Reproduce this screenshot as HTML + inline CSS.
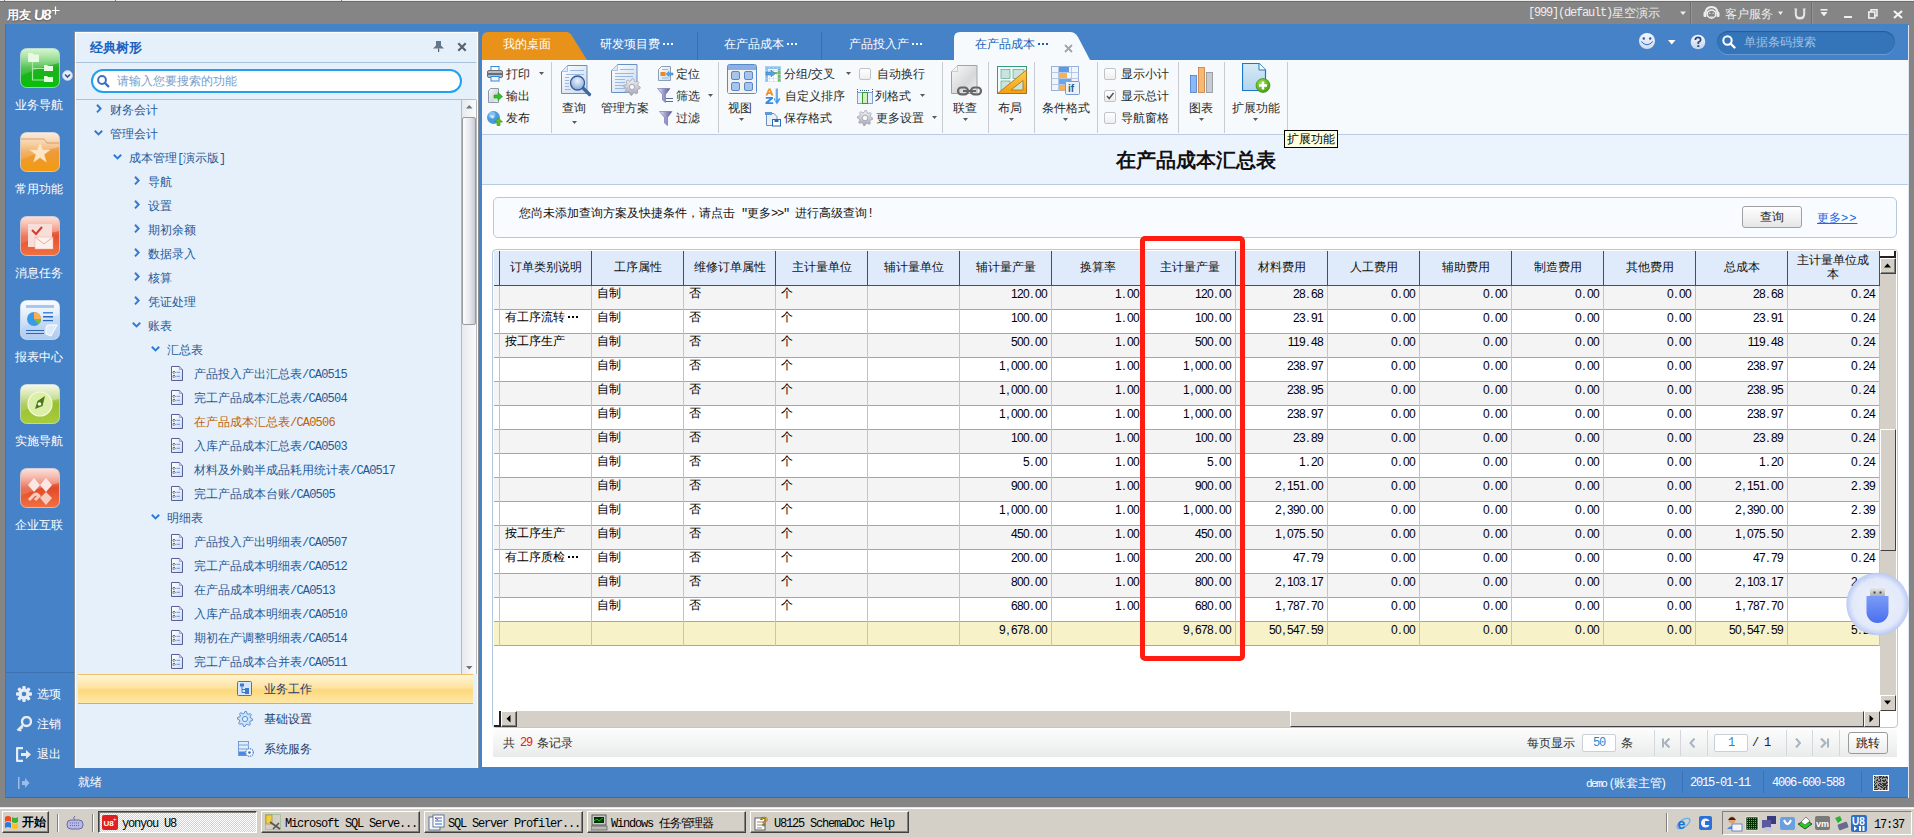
<!DOCTYPE html><html><head><meta charset="utf-8"><style>
*{margin:0;padding:0;box-sizing:border-box}
html,body{width:1914px;height:837px;overflow:hidden;background:#858585;font-family:"Liberation Sans",sans-serif;font-size:12px;color:#000}
.ab{position:absolute}
.t{position:absolute;white-space:nowrap;line-height:14px}
.num{letter-spacing:-0.67px}
.m{font-family:'Liberation Mono',monospace;letter-spacing:-1.2px}
.p{display:inline-block;width:6px;text-align:center;letter-spacing:0}
.ell{display:inline-block;width:13px;height:2px;vertical-align:3px;background-image:linear-gradient(currentColor,currentColor),linear-gradient(currentColor,currentColor),linear-gradient(currentColor,currentColor);background-size:2px 2px;background-position:3px 0,7px 0,11px 0;background-repeat:no-repeat}
</style></head><body>

<div class="ab" style="left:0;top:0;width:1914px;height:1px;background:#ececec"></div>
<div class="ab" style="left:0;top:1px;width:1914px;height:24px;background:#858585;border-top:1px solid #6c6c6c"></div>
<div class="ab" style="left:4px;top:0;width:1px;height:1px;background:#777"></div>
<div class="ab" style="left:115px;top:0;width:1px;height:1px;background:#777"></div>
<div class="ab" style="left:341px;top:0;width:1px;height:1px;background:#777"></div>
<div class="t" style="left:7px;top:8px;color:#fff;font-weight:bold;font-size:12px;text-shadow:0 1px 1px #555">用友</div><div class="t" style="left:34px;top:8px;color:#fff;font-weight:bold;font-size:15px;letter-spacing:-1.5px;transform:skewX(-6deg);text-shadow:0 1px 1px #555">U8</div><svg class="ab" style="left:52px;top:6px" width="8" height="9"><path d="M3.5 0.5 V8.5 M0 4.5 H7.5" stroke="#fff" stroke-width="1.2"/></svg>
<div class="t" style="left:1528px;top:6px;color:#eee;font-family:'Liberation Mono';letter-spacing:-1.2px">[999](default)</div><div class="t" style="left:1612px;top:6px;color:#eee">星空演示</div>
<svg class="ab" style="left:1680px;top:11px" width="7" height="5"><path d="M0 0.5 H6 L3 4 Z" fill="#eee"/></svg>
<div class="ab" style="left:1690px;top:2px;width:2px;height:22px;border-left:1px solid #6e6e6e;border-right:1px solid #959595"></div>
<svg class="ab" style="left:1703px;top:6px" width="17" height="15"><path d="M2.5 8 Q2.5 1 8.5 1 Q14.5 1 14.5 8" stroke="#eee" stroke-width="2" fill="none"/><rect x="0.5" y="6" width="3" height="5" rx="1" fill="#eee"/><rect x="13.5" y="6" width="3" height="5" rx="1" fill="#eee"/><path d="M4.5 6 Q8.5 2 12.5 6 V10 Q8.5 14.5 4.5 10 Z" fill="none" stroke="#eee" stroke-width="1.3"/><path d="M6 7 L7.5 7.5 M9.5 7.5 L11 7 M7 11 H10" stroke="#eee" stroke-width=".9"/></svg>
<div class="t" style="left:1725px;top:7px;color:#eee">客户服务</div>
<svg class="ab" style="left:1778px;top:11px" width="6" height="5"><path d="M0 0.5 H5 L2.5 4 Z" fill="#eee"/></svg>
<svg class="ab" style="left:1793px;top:8px" width="14" height="12"><path d="M1 0.5 H4.5 L3.8 1.5 V6 Q3.8 9 7 9 Q10.2 9 10.2 6 V1.5 L9.5 0.5 H13 L12.2 1.5 V6 Q12.2 11.5 7 11.5 Q1.8 11.5 1.8 6 V1.5 Z" fill="#e6e6e6"/></svg>
<div class="ab" style="left:1811px;top:2px;width:2px;height:22px;border-left:1px solid #6e6e6e;border-right:1px solid #959595"></div>
<svg class="ab" style="left:1820px;top:9px" width="9" height="9"><rect x="0.5" y="0" width="7" height="1.6" fill="#eee"/><path d="M0.5 3 H7.5 L4 7.5 Z" fill="#eee"/></svg>
<div class="ab" style="left:1844px;top:16px;width:8px;height:2px;background:#eee"></div>
<svg class="ab" style="left:1868px;top:9px" width="10" height="10"><rect x="3" y="0.8" width="6" height="6" fill="none" stroke="#eee" stroke-width="1.6"/><rect x="0.8" y="3" width="6" height="6" fill="#858585" stroke="#eee" stroke-width="1.6"/></svg>
<svg class="ab" style="left:1893px;top:10px" width="10" height="9"><path d="M1 1 L9 8 M9 1 L1 8" stroke="#f4f4f4" stroke-width="2.2"/></svg>
<div class="ab" style="left:5px;top:24px;width:1904px;height:774px;background:#4682c8;box-shadow:inset 0 -1px #3c6aa8;border-left:1px solid #6a6e74"></div>
<div class="ab" style="left:1908px;top:25px;width:1px;height:773px;background:#dfe8f3"></div>
<svg class="ab" style="left:20px;top:48px" width="40" height="40"><defs><linearGradient id="g0" x1="0" y1="0" x2="0" y2="1"><stop offset="0" stop-color="#a0e890"/><stop offset=".5" stop-color="#20b020"/><stop offset="1" stop-color="#08c008"/></linearGradient>
<linearGradient id="h0" x1="0" y1="0" x2="0" y2="1"><stop offset="0" stop-color="#fff" stop-opacity=".55"/><stop offset="1" stop-color="#fff" stop-opacity=".1"/></linearGradient></defs>
<rect x="0.5" y="0.5" width="39" height="39" rx="6" fill="url(#g0)" stroke="#fff" stroke-opacity=".5"/>
<path d="M1 7 Q1 1 7 1 H33 Q39 1 39 7 V15 Q20 19 1 28 Z" fill="url(#h0)"/><path d="M8 5 H12.5 L13.5 6.5 H19 V14 H8 Z" fill="#e8fae4"/>
<path d="M12.5 14 V32 H24 M12.5 20.5 H24" stroke="#a8e8a0" stroke-width="1.2" fill="none"/>
<path d="M24 17 H27 L28 18 H33 V23 H24 Z" fill="#e6f9e2"/>
<path d="M24 28 H27 L28 29 H33 V34 H24 Z" fill="#e6f9e2"/></svg>
<div class="t" style="left:15px;top:98px;color:#fff">业务导航</div>
<svg class="ab" style="left:20px;top:132px" width="40" height="40"><defs><linearGradient id="g1" x1="0" y1="0" x2="0" y2="1"><stop offset="0" stop-color="#f6d2b0"/><stop offset=".5" stop-color="#ee9a3a"/><stop offset="1" stop-color="#f29a10"/></linearGradient>
<linearGradient id="h1" x1="0" y1="0" x2="0" y2="1"><stop offset="0" stop-color="#fff" stop-opacity=".55"/><stop offset="1" stop-color="#fff" stop-opacity=".1"/></linearGradient></defs>
<rect x="0.5" y="0.5" width="39" height="39" rx="6" fill="url(#g1)" stroke="#fff" stroke-opacity=".5"/>
<path d="M1 7 Q1 1 7 1 H33 Q39 1 39 7 V15 Q20 19 1 28 Z" fill="url(#h1)"/><path d="M1 7 H24 L27 11 H39" stroke="#c07a40" stroke-opacity=".6" fill="none"/>
<path d="M20 11 L22.6 18 L30 18 L24 22.5 L26.3 30 L20 25.5 L13.7 30 L16 22.5 L10 18 L17.4 18 Z" fill="#fbe6cc" stroke="#f8e0a0" stroke-width=".6"/></svg>
<div class="t" style="left:15px;top:182px;color:#fff">常用功能</div>
<svg class="ab" style="left:20px;top:216px" width="40" height="40"><defs><linearGradient id="g2" x1="0" y1="0" x2="0" y2="1"><stop offset="0" stop-color="#f8b8a8"/><stop offset=".5" stop-color="#e6502e"/><stop offset="1" stop-color="#f27040"/></linearGradient>
<linearGradient id="h2" x1="0" y1="0" x2="0" y2="1"><stop offset="0" stop-color="#fff" stop-opacity=".55"/><stop offset="1" stop-color="#fff" stop-opacity=".1"/></linearGradient></defs>
<rect x="0.5" y="0.5" width="39" height="39" rx="6" fill="url(#g2)" stroke="#fff" stroke-opacity=".5"/>
<path d="M1 7 Q1 1 7 1 H33 Q39 1 39 7 V15 Q20 19 1 28 Z" fill="url(#h2)"/><rect x="8" y="8" width="24" height="23" fill="#f8ded8"/>
<path d="M12 14 L16 18 L22 11" stroke="#d83a2a" stroke-width="2" fill="none"/>
<rect x="15" y="21" width="18" height="12" fill="#fcefec" stroke="#e8b0a0" stroke-width=".5"/>
<path d="M15 21 L24 28 L33 21" stroke="#d8a090" stroke-width=".8" fill="none"/></svg>
<div class="t" style="left:15px;top:266px;color:#fff">消息任务</div>
<svg class="ab" style="left:20px;top:300px" width="40" height="40"><defs><linearGradient id="g3" x1="0" y1="0" x2="0" y2="1"><stop offset="0" stop-color="#f4f8fe"/><stop offset=".5" stop-color="#c8dcf6"/><stop offset="1" stop-color="#b0ccf0"/></linearGradient>
<linearGradient id="h3" x1="0" y1="0" x2="0" y2="1"><stop offset="0" stop-color="#fff" stop-opacity=".55"/><stop offset="1" stop-color="#fff" stop-opacity=".1"/></linearGradient></defs>
<rect x="0.5" y="0.5" width="39" height="39" rx="6" fill="url(#g3)" stroke="#fff" stroke-opacity=".5"/>
<path d="M1 7 Q1 1 7 1 H33 Q39 1 39 7 V15 Q20 19 1 28 Z" fill="url(#h3)"/><rect x="6" y="5" width="28" height="3" fill="#a8c8f4"/>
<circle cx="14" cy="19" r="7" fill="#3a9ae8"/>
<path d="M14 19 V12 A7 7 0 0 1 21 19 Z" fill="#f8b050"/>
<path d="M14 19 H21 A7 7 0 0 1 18.5 24.4 Z" fill="#7cc030"/>
<rect x="23" y="12" width="10" height="1.5" fill="#4a88d0"/><rect x="23" y="16" width="10" height="1.5" fill="#2a68c0"/><rect x="23" y="20" width="10" height="1.2" fill="#2a68c0"/>
<rect x="6" y="30" width="18" height="1" fill="#2a68c0"/><rect x="6" y="33" width="18" height="1" fill="#2a68c0"/>
<path d="M26 34 V28 Q26 25 29 25 H37 L31 36 Z" fill="#dfeaf8" stroke="#fff"/></svg>
<div class="t" style="left:15px;top:350px;color:#fff">报表中心</div>
<svg class="ab" style="left:20px;top:384px" width="40" height="40"><defs><linearGradient id="g4" x1="0" y1="0" x2="0" y2="1"><stop offset="0" stop-color="#e2f0c8"/><stop offset=".5" stop-color="#98c030"/><stop offset="1" stop-color="#a8cc3c"/></linearGradient>
<linearGradient id="h4" x1="0" y1="0" x2="0" y2="1"><stop offset="0" stop-color="#fff" stop-opacity=".55"/><stop offset="1" stop-color="#fff" stop-opacity=".1"/></linearGradient></defs>
<rect x="0.5" y="0.5" width="39" height="39" rx="6" fill="url(#g4)" stroke="#fff" stroke-opacity=".5"/>
<path d="M1 7 Q1 1 7 1 H33 Q39 1 39 7 V15 Q20 19 1 28 Z" fill="url(#h4)"/><circle cx="20" cy="20" r="12" fill="#dcefa8" stroke="#f4fadc" stroke-width="1.2"/>
<path d="M25 12 L22.5 22 L15 25 L17.5 17 Z" fill="#4a7a10"/>
<circle cx="19.5" cy="20" r="1.8" fill="#fff"/></svg>
<div class="t" style="left:15px;top:434px;color:#fff">实施导航</div>
<svg class="ab" style="left:20px;top:468px" width="40" height="40"><defs><linearGradient id="g5" x1="0" y1="0" x2="0" y2="1"><stop offset="0" stop-color="#f8b8a8"/><stop offset=".5" stop-color="#e24a2a"/><stop offset="1" stop-color="#f27040"/></linearGradient>
<linearGradient id="h5" x1="0" y1="0" x2="0" y2="1"><stop offset="0" stop-color="#fff" stop-opacity=".55"/><stop offset="1" stop-color="#fff" stop-opacity=".1"/></linearGradient></defs>
<rect x="0.5" y="0.5" width="39" height="39" rx="6" fill="url(#g5)" stroke="#fff" stroke-opacity=".5"/>
<path d="M1 7 Q1 1 7 1 H33 Q39 1 39 7 V15 Q20 19 1 28 Z" fill="url(#h5)"/><path d="M14 10 L20 17 L14 24 L8 17 Z" fill="#fbe8e4"/>
<path d="M26 10 L32 17 L26 24 L20 17 Z" fill="#fbe8e4"/>
<path d="M26 24 L32 30 L26 37 L20 30 Z" fill="#f6ccc0"/>
<path d="M9 32 L14 27 Q17 25 19 28 L15 32" stroke="#f6ccc0" stroke-width="3" fill="none"/></svg>
<div class="t" style="left:15px;top:518px;color:#fff">企业互联</div>
<svg class="ab" style="left:62px;top:70px" width="11" height="11"><circle cx="5.5" cy="5.5" r="5" fill="#e8eef8" stroke="#b8c8e0" stroke-width=".8"/><path d="M3 4.5 L5.5 7 L8 4.5" stroke="#2a5aa0" stroke-width="1.6" fill="none"/></svg>
<div class="ab" style="left:6px;top:672px;width:69px;height:1px;background:#3c70b0"></div>
<svg class="ab" style="left:16px;top:686px" width="16" height="16"><g fill="#e6ecf4"><circle cx="8" cy="8" r="5.5"/><rect x="6.3" y="0" width="3.4" height="16" rx="1" transform="rotate(0 8 8)"/><rect x="6.3" y="0" width="3.4" height="16" rx="1" transform="rotate(45 8 8)"/><rect x="6.3" y="0" width="3.4" height="16" rx="1" transform="rotate(90 8 8)"/><rect x="6.3" y="0" width="3.4" height="16" rx="1" transform="rotate(135 8 8)"/></g><circle cx="8" cy="8" r="2.3" fill="#4682c8"/></svg>
<svg class="ab" style="left:16px;top:716px" width="16" height="16"><circle cx="10.5" cy="5.5" r="4.5" fill="none" stroke="#e6ecf4" stroke-width="2.4"/><path d="M7.5 8.5 L1.5 14.5 M3 13 L5 15 M5 11 L6.5 12.5" stroke="#e6ecf4" stroke-width="2.4"/></svg>
<svg class="ab" style="left:16px;top:747px" width="16" height="15"><path d="M7 1 H2 Q1 1 1 2 V13 Q1 14 2 14 H7" stroke="#e6ecf4" stroke-width="2.4" fill="none"/><path d="M5 6 H10 V3 L15 7.5 L10 12 V9 H5 Z" fill="#e6ecf4"/></svg>
<div class="t" style="left:37px;top:687px;color:#fff">选项</div>
<div class="t" style="left:37px;top:717px;color:#fff">注销</div>
<div class="t" style="left:37px;top:747px;color:#fff">退出</div>
<svg class="ab" style="left:18px;top:776px" width="12" height="14"><rect x="0" y="1" width="1.5" height="12" fill="#9dbde6"/><path d="M4 5 H7 V2 L11.5 7 L7 12 V9 H4 Z" fill="#9dbde6"/></svg>
<div class="ab" style="left:74px;top:31px;width:405px;height:737px;background:#8a8f96"></div>
<div class="ab" style="left:75px;top:32px;width:403px;height:736px;background:#e6f0fa;border:1px solid #fff;border-right:1px solid #fff;border-bottom:0"></div>
<div class="t" style="left:90px;top:41px;color:#1a62c0;font-weight:bold;font-size:13px">经典树形</div>
<svg class="ab" style="left:432px;top:40px" width="13" height="13"><path d="M4 1 H9 V5.5 L12 8.5 H1 L4 5.5 Z" fill="#66768a"/><rect x="6" y="8.5" width="1.2" height="3.5" fill="#55606e"/></svg>
<svg class="ab" style="left:457px;top:42px" width="10" height="10"><path d="M1.3 1.3 L8.7 8.7 M8.7 1.3 L1.3 8.7" stroke="#566474" stroke-width="2.2"/></svg>
<div class="ab" style="left:76px;top:62px;width:400px;height:1px;background:#a9c2dc"></div>
<div class="ab" style="left:91px;top:69px;width:371px;height:24px;border:2px solid #22a0f0;border-radius:12px;background:#fff"></div>
<svg class="ab" style="left:97px;top:75px" width="13" height="13"><circle cx="5" cy="5" r="3.9" fill="none" stroke="#3a72c0" stroke-width="2"/><path d="M8 8 L11.3 11.3" stroke="#3a72c0" stroke-width="2.4" stroke-linecap="round"/></svg>
<div class="t" style="left:117px;top:74px;color:#7b9dca">请输入您要搜索的功能</div>
<div class="ab" style="left:76px;top:99px;width:400px;height:1px;background:#a9c2dc"></div>
<svg width="0" height="0" style="position:absolute"><defs><linearGradient id="fgr" x1="0" y1="0" x2="1" y2="1"><stop offset="0" stop-color="#fff"/><stop offset="1" stop-color="#c8dcf4"/></linearGradient></defs></svg>
<svg class="ab" style="left:96px;top:104px" width="6" height="10"><path d="M1 0.8 L4.6 4.6 L1 8.4" stroke="#2f7ad8" stroke-width="2" fill="none"/></svg>
<div class="t" style="left:110px;top:103px;color:#1f5a9a">财务会计</div>
<svg class="ab" style="left:94px;top:130px" width="10" height="6"><path d="M0.8 0.8 L4.5 4.4 L8.2 0.8" stroke="#2f7ad8" stroke-width="2" fill="none"/></svg>
<div class="t" style="left:110px;top:127px;color:#1f5a9a">管理会计</div>
<svg class="ab" style="left:113px;top:154px" width="10" height="6"><path d="M0.8 0.8 L4.5 4.4 L8.2 0.8" stroke="#2f7ad8" stroke-width="2" fill="none"/></svg>
<div class="t" style="left:129px;top:151px;color:#1f5a9a">成本管理<span class=m>[</span>演示版<span class=m>]</span></div>
<svg class="ab" style="left:134px;top:176px" width="6" height="10"><path d="M1 0.8 L4.6 4.6 L1 8.4" stroke="#2f7ad8" stroke-width="2" fill="none"/></svg>
<div class="t" style="left:148px;top:175px;color:#1f5a9a">导航</div>
<svg class="ab" style="left:134px;top:200px" width="6" height="10"><path d="M1 0.8 L4.6 4.6 L1 8.4" stroke="#2f7ad8" stroke-width="2" fill="none"/></svg>
<div class="t" style="left:148px;top:199px;color:#1f5a9a">设置</div>
<svg class="ab" style="left:134px;top:224px" width="6" height="10"><path d="M1 0.8 L4.6 4.6 L1 8.4" stroke="#2f7ad8" stroke-width="2" fill="none"/></svg>
<div class="t" style="left:148px;top:223px;color:#1f5a9a">期初余额</div>
<svg class="ab" style="left:134px;top:248px" width="6" height="10"><path d="M1 0.8 L4.6 4.6 L1 8.4" stroke="#2f7ad8" stroke-width="2" fill="none"/></svg>
<div class="t" style="left:148px;top:247px;color:#1f5a9a">数据录入</div>
<svg class="ab" style="left:134px;top:272px" width="6" height="10"><path d="M1 0.8 L4.6 4.6 L1 8.4" stroke="#2f7ad8" stroke-width="2" fill="none"/></svg>
<div class="t" style="left:148px;top:271px;color:#1f5a9a">核算</div>
<svg class="ab" style="left:134px;top:296px" width="6" height="10"><path d="M1 0.8 L4.6 4.6 L1 8.4" stroke="#2f7ad8" stroke-width="2" fill="none"/></svg>
<div class="t" style="left:148px;top:295px;color:#1f5a9a">凭证处理</div>
<svg class="ab" style="left:132px;top:322px" width="10" height="6"><path d="M0.8 0.8 L4.5 4.4 L8.2 0.8" stroke="#2f7ad8" stroke-width="2" fill="none"/></svg>
<div class="t" style="left:148px;top:319px;color:#1f5a9a">账表</div>
<svg class="ab" style="left:151px;top:346px" width="10" height="6"><path d="M0.8 0.8 L4.5 4.4 L8.2 0.8" stroke="#2f7ad8" stroke-width="2" fill="none"/></svg>
<div class="t" style="left:167px;top:343px;color:#1f5a9a">汇总表</div>
<svg class="ab" style="left:171px;top:366px" width="12" height="15"><path d="M0.5 0.5 H8.5 L11.5 3.5 V14.5 H0.5 Z" fill="url(#fgr)" stroke="#5c5c98"/><path d="M8.5 0.5 V3.5 H11.5" fill="#c8cce8" stroke="#8a8ab8" stroke-width=".6"/><path d="M3 5 L4.3 6.3 L3 7.6 L1.7 6.3 Z M3 9 L4.3 10.3 L3 11.6 L1.7 10.3 Z" fill="none" stroke="#333" stroke-width=".7"/><path d="M5.5 6.3 H9 M5.5 10.3 H9" stroke="#6a8ac8" stroke-width=".9"/></svg>
<div class="t" style="left:194px;top:367px;color:#1f5a9a">产品投入产出汇总表<span class=m style="letter-spacing:-0.8px">/CA0515</span></div>
<svg class="ab" style="left:171px;top:390px" width="12" height="15"><path d="M0.5 0.5 H8.5 L11.5 3.5 V14.5 H0.5 Z" fill="url(#fgr)" stroke="#5c5c98"/><path d="M8.5 0.5 V3.5 H11.5" fill="#c8cce8" stroke="#8a8ab8" stroke-width=".6"/><path d="M3 5 L4.3 6.3 L3 7.6 L1.7 6.3 Z M3 9 L4.3 10.3 L3 11.6 L1.7 10.3 Z" fill="none" stroke="#333" stroke-width=".7"/><path d="M5.5 6.3 H9 M5.5 10.3 H9" stroke="#6a8ac8" stroke-width=".9"/></svg>
<div class="t" style="left:194px;top:391px;color:#1f5a9a">完工产品成本汇总表<span class=m style="letter-spacing:-0.8px">/CA0504</span></div>
<svg class="ab" style="left:171px;top:414px" width="12" height="15"><path d="M0.5 0.5 H8.5 L11.5 3.5 V14.5 H0.5 Z" fill="url(#fgr)" stroke="#5c5c98"/><path d="M8.5 0.5 V3.5 H11.5" fill="#c8cce8" stroke="#8a8ab8" stroke-width=".6"/><path d="M3 5 L4.3 6.3 L3 7.6 L1.7 6.3 Z M3 9 L4.3 10.3 L3 11.6 L1.7 10.3 Z" fill="none" stroke="#333" stroke-width=".7"/><path d="M5.5 6.3 H9 M5.5 10.3 H9" stroke="#6a8ac8" stroke-width=".9"/></svg>
<div class="t" style="left:194px;top:415px;color:#c0600a">在产品成本汇总表<span class=m style="letter-spacing:-0.8px">/CA0506</span></div>
<svg class="ab" style="left:171px;top:438px" width="12" height="15"><path d="M0.5 0.5 H8.5 L11.5 3.5 V14.5 H0.5 Z" fill="url(#fgr)" stroke="#5c5c98"/><path d="M8.5 0.5 V3.5 H11.5" fill="#c8cce8" stroke="#8a8ab8" stroke-width=".6"/><path d="M3 5 L4.3 6.3 L3 7.6 L1.7 6.3 Z M3 9 L4.3 10.3 L3 11.6 L1.7 10.3 Z" fill="none" stroke="#333" stroke-width=".7"/><path d="M5.5 6.3 H9 M5.5 10.3 H9" stroke="#6a8ac8" stroke-width=".9"/></svg>
<div class="t" style="left:194px;top:439px;color:#1f5a9a">入库产品成本汇总表<span class=m style="letter-spacing:-0.8px">/CA0503</span></div>
<svg class="ab" style="left:171px;top:462px" width="12" height="15"><path d="M0.5 0.5 H8.5 L11.5 3.5 V14.5 H0.5 Z" fill="url(#fgr)" stroke="#5c5c98"/><path d="M8.5 0.5 V3.5 H11.5" fill="#c8cce8" stroke="#8a8ab8" stroke-width=".6"/><path d="M3 5 L4.3 6.3 L3 7.6 L1.7 6.3 Z M3 9 L4.3 10.3 L3 11.6 L1.7 10.3 Z" fill="none" stroke="#333" stroke-width=".7"/><path d="M5.5 6.3 H9 M5.5 10.3 H9" stroke="#6a8ac8" stroke-width=".9"/></svg>
<div class="t" style="left:194px;top:463px;color:#1f5a9a">材料及外购半成品耗用统计表<span class=m style="letter-spacing:-0.8px">/CA0517</span></div>
<svg class="ab" style="left:171px;top:486px" width="12" height="15"><path d="M0.5 0.5 H8.5 L11.5 3.5 V14.5 H0.5 Z" fill="url(#fgr)" stroke="#5c5c98"/><path d="M8.5 0.5 V3.5 H11.5" fill="#c8cce8" stroke="#8a8ab8" stroke-width=".6"/><path d="M3 5 L4.3 6.3 L3 7.6 L1.7 6.3 Z M3 9 L4.3 10.3 L3 11.6 L1.7 10.3 Z" fill="none" stroke="#333" stroke-width=".7"/><path d="M5.5 6.3 H9 M5.5 10.3 H9" stroke="#6a8ac8" stroke-width=".9"/></svg>
<div class="t" style="left:194px;top:487px;color:#1f5a9a">完工产品成本台账<span class=m style="letter-spacing:-0.8px">/CA0505</span></div>
<svg class="ab" style="left:151px;top:514px" width="10" height="6"><path d="M0.8 0.8 L4.5 4.4 L8.2 0.8" stroke="#2f7ad8" stroke-width="2" fill="none"/></svg>
<div class="t" style="left:167px;top:511px;color:#1f5a9a">明细表</div>
<svg class="ab" style="left:171px;top:534px" width="12" height="15"><path d="M0.5 0.5 H8.5 L11.5 3.5 V14.5 H0.5 Z" fill="url(#fgr)" stroke="#5c5c98"/><path d="M8.5 0.5 V3.5 H11.5" fill="#c8cce8" stroke="#8a8ab8" stroke-width=".6"/><path d="M3 5 L4.3 6.3 L3 7.6 L1.7 6.3 Z M3 9 L4.3 10.3 L3 11.6 L1.7 10.3 Z" fill="none" stroke="#333" stroke-width=".7"/><path d="M5.5 6.3 H9 M5.5 10.3 H9" stroke="#6a8ac8" stroke-width=".9"/></svg>
<div class="t" style="left:194px;top:535px;color:#1f5a9a">产品投入产出明细表<span class=m style="letter-spacing:-0.8px">/CA0507</span></div>
<svg class="ab" style="left:171px;top:558px" width="12" height="15"><path d="M0.5 0.5 H8.5 L11.5 3.5 V14.5 H0.5 Z" fill="url(#fgr)" stroke="#5c5c98"/><path d="M8.5 0.5 V3.5 H11.5" fill="#c8cce8" stroke="#8a8ab8" stroke-width=".6"/><path d="M3 5 L4.3 6.3 L3 7.6 L1.7 6.3 Z M3 9 L4.3 10.3 L3 11.6 L1.7 10.3 Z" fill="none" stroke="#333" stroke-width=".7"/><path d="M5.5 6.3 H9 M5.5 10.3 H9" stroke="#6a8ac8" stroke-width=".9"/></svg>
<div class="t" style="left:194px;top:559px;color:#1f5a9a">完工产品成本明细表<span class=m style="letter-spacing:-0.8px">/CA0512</span></div>
<svg class="ab" style="left:171px;top:582px" width="12" height="15"><path d="M0.5 0.5 H8.5 L11.5 3.5 V14.5 H0.5 Z" fill="url(#fgr)" stroke="#5c5c98"/><path d="M8.5 0.5 V3.5 H11.5" fill="#c8cce8" stroke="#8a8ab8" stroke-width=".6"/><path d="M3 5 L4.3 6.3 L3 7.6 L1.7 6.3 Z M3 9 L4.3 10.3 L3 11.6 L1.7 10.3 Z" fill="none" stroke="#333" stroke-width=".7"/><path d="M5.5 6.3 H9 M5.5 10.3 H9" stroke="#6a8ac8" stroke-width=".9"/></svg>
<div class="t" style="left:194px;top:583px;color:#1f5a9a">在产品成本明细表<span class=m style="letter-spacing:-0.8px">/CA0513</span></div>
<svg class="ab" style="left:171px;top:606px" width="12" height="15"><path d="M0.5 0.5 H8.5 L11.5 3.5 V14.5 H0.5 Z" fill="url(#fgr)" stroke="#5c5c98"/><path d="M8.5 0.5 V3.5 H11.5" fill="#c8cce8" stroke="#8a8ab8" stroke-width=".6"/><path d="M3 5 L4.3 6.3 L3 7.6 L1.7 6.3 Z M3 9 L4.3 10.3 L3 11.6 L1.7 10.3 Z" fill="none" stroke="#333" stroke-width=".7"/><path d="M5.5 6.3 H9 M5.5 10.3 H9" stroke="#6a8ac8" stroke-width=".9"/></svg>
<div class="t" style="left:194px;top:607px;color:#1f5a9a">入库产品成本明细表<span class=m style="letter-spacing:-0.8px">/CA0510</span></div>
<svg class="ab" style="left:171px;top:630px" width="12" height="15"><path d="M0.5 0.5 H8.5 L11.5 3.5 V14.5 H0.5 Z" fill="url(#fgr)" stroke="#5c5c98"/><path d="M8.5 0.5 V3.5 H11.5" fill="#c8cce8" stroke="#8a8ab8" stroke-width=".6"/><path d="M3 5 L4.3 6.3 L3 7.6 L1.7 6.3 Z M3 9 L4.3 10.3 L3 11.6 L1.7 10.3 Z" fill="none" stroke="#333" stroke-width=".7"/><path d="M5.5 6.3 H9 M5.5 10.3 H9" stroke="#6a8ac8" stroke-width=".9"/></svg>
<div class="t" style="left:194px;top:631px;color:#1f5a9a">期初在产调整明细表<span class=m style="letter-spacing:-0.8px">/CA0514</span></div>
<svg class="ab" style="left:171px;top:654px" width="12" height="15"><path d="M0.5 0.5 H8.5 L11.5 3.5 V14.5 H0.5 Z" fill="url(#fgr)" stroke="#5c5c98"/><path d="M8.5 0.5 V3.5 H11.5" fill="#c8cce8" stroke="#8a8ab8" stroke-width=".6"/><path d="M3 5 L4.3 6.3 L3 7.6 L1.7 6.3 Z M3 9 L4.3 10.3 L3 11.6 L1.7 10.3 Z" fill="none" stroke="#333" stroke-width=".7"/><path d="M5.5 6.3 H9 M5.5 10.3 H9" stroke="#6a8ac8" stroke-width=".9"/></svg>
<div class="t" style="left:194px;top:655px;color:#1f5a9a">完工产品成本合并表<span class=m style="letter-spacing:-0.8px">/CA0511</span></div>
<div class="ab" style="left:461px;top:100px;width:16px;height:574px;background:linear-gradient(90deg,#e6eaee,#fafbfc);border-left:1px solid #b8b8b8;border-right:1px solid #b8b8b8"></div>
<div class="ab" style="left:462px;top:117px;width:14px;height:208px;background:linear-gradient(90deg,#fdfdfe,#e4e6ec 60%,#c6cad6);border:1px solid #9a9a9a;border-radius:2px"></div>
<svg class="ab" style="left:466px;top:105px" width="7" height="4"><path d="M0 3.5 H6.5 L3.25 0 Z" fill="#6a7480"/></svg>
<svg class="ab" style="left:466px;top:666px" width="7" height="4"><path d="M0 0 H6.5 L3.25 3.5 Z" fill="#6a7480"/></svg>
<div class="ab" style="left:78px;top:674px;width:395px;height:30px;background:linear-gradient(180deg,#fff6d2,#fde3a0 45%,#fdd97e 55%,#fee7a8);border-top:1px solid #f0c070;border-bottom:1px solid #e8a850"></div>
<svg class="ab" style="left:237px;top:681px" width="15" height="15"><rect x="0.5" y="0.5" width="14" height="14" rx="1" fill="#d8e8fa" stroke="#3a78c8"/><rect x="3" y="2.5" width="4" height="3" fill="#3a7ad0"/><path d="M5 5.5 V11.5 H8 M5 8.5 H8" stroke="#3a7ad0" fill="none"/><rect x="8" y="7" width="4" height="3" fill="#3a7ad0"/><rect x="8" y="10" width="4" height="3" fill="#3a7ad0"/></svg>
<div class="t" style="left:264px;top:682px;color:#1a3a6a">业务工作</div>
<svg class="ab" style="left:237px;top:711px" width="16" height="16"><polygon points="8.00,0.40 9.48,0.55 10.14,2.83 11.11,3.34 13.37,2.63 14.32,3.78 13.17,5.86 13.49,6.91 15.60,8.00 15.45,9.48 13.17,10.14 12.66,11.11 13.37,13.37 12.22,14.32 10.14,13.17 9.09,13.49 8.00,15.60 6.52,15.45 5.86,13.17 4.89,12.66 2.63,13.37 1.68,12.22 2.83,10.14 2.51,9.09 0.40,8.00 0.55,6.52 2.83,5.86 3.34,4.89 2.63,2.63 3.78,1.68 5.86,2.83 6.91,2.51" fill="#cfe2f8" stroke="#4a88d0" stroke-width=".9"/><circle cx="8" cy="8" r="2.6" fill="#e6f0fa" stroke="#4a88d0" stroke-width=".9"/></svg>
<div class="t" style="left:264px;top:712px;color:#1a3a6a">基础设置</div>
<svg class="ab" style="left:238px;top:741px" width="16" height="16"><rect x="0.5" y="0.5" width="10" height="14" fill="#e0ecf8" stroke="#5a8ad0" stroke-width=".8"/><rect x="1" y="3" width="9.5" height="2" fill="#a8c8ec"/><rect x="1" y="7" width="9.5" height="2" fill="#a8c8ec"/><rect x="1" y="10.5" width="9.5" height="4" fill="#4a8ae0"/><circle cx="11.5" cy="11.5" r="3.8" fill="#fff" stroke="#5a8ad0" stroke-width="1.4" stroke-dasharray="1.2 .8"/><circle cx="11.5" cy="11.5" r="1.3" fill="#3a6ab0"/></svg>
<div class="t" style="left:264px;top:742px;color:#1a3a6a">系统服务</div>
<div class="ab" style="left:482px;top:60px;width:1426px;height:707px;background:#fff"></div>
<svg class="ab" style="left:482px;top:32px" width="110" height="28"><path d="M0 28 V6 Q0 0 6 0 H84 Q88 0 90 4 L105 28 Z" fill="#e8921a"/></svg>
<div class="t" style="left:503px;top:37px;color:#fff">我的桌面</div>
<div class="t" style="left:600px;top:37px;color:#fff">研发项目费<span class=ell></span></div>
<div class="ab" style="left:697px;top:32px;width:1px;height:28px;background:#3a6eb0"></div>
<div class="t" style="left:724px;top:37px;color:#fff">在产品成本<span class=ell></span></div>
<div class="ab" style="left:821px;top:32px;width:1px;height:28px;background:#3a6eb0"></div>
<div class="t" style="left:849px;top:37px;color:#fff">产品投入产<span class=ell></span></div>
<svg class="ab" style="left:954px;top:32px" width="140" height="28"><path d="M0 28 V6 Q0 0 6 0 H116 Q121 0 124 5 L136 28 Z" fill="#f6fafd"/></svg>
<div class="t" style="left:975px;top:37px;color:#1a5eb8">在产品成本<span class=ell></span></div>
<svg class="ab" style="left:1064px;top:44px" width="9" height="9"><path d="M1 1 L8 8 M8 1 L1 8" stroke="#a0a4a8" stroke-width="1.8"/></svg>
<svg class="ab" style="left:1638px;top:32px" width="18" height="18"><defs><linearGradient id="smg" x1="0" y1="0" x2="0" y2="1"><stop offset="0" stop-color="#f4f6fa"/><stop offset="1" stop-color="#cfdcee"/></linearGradient></defs><circle cx="9" cy="9" r="8" fill="url(#smg)"/><circle cx="5.8" cy="6.5" r="1.2" fill="#2a5aa0"/><circle cx="12.2" cy="6.5" r="1.2" fill="#2a5aa0"/><path d="M3.2 9.5 Q9 16 14.8 9.5" stroke="#3a6ab0" stroke-width="1" fill="none"/></svg>
<svg class="ab" style="left:1668px;top:40px" width="8" height="5"><path d="M0 0 H7.5 L3.75 4.5 Z" fill="#fff"/></svg>
<svg class="ab" style="left:1690px;top:34px" width="16" height="16"><defs><linearGradient id="hpg" x1="0" y1="0" x2="0" y2="1"><stop offset="0" stop-color="#f8f8fc"/><stop offset="1" stop-color="#c4d4ec"/></linearGradient></defs><circle cx="8" cy="8" r="7.3" fill="url(#hpg)"/><path d="M5.3 6 Q5.3 3.3 8 3.3 Q10.7 3.3 10.7 5.8 Q10.7 7.4 8.3 8.3 V10" stroke="#2a4a80" stroke-width="1.7" fill="none"/><rect x="7.3" y="11.2" width="2" height="1.8" fill="#2a4a80"/></svg>
<div class="ab" style="left:1717px;top:31px;width:178px;height:23px;border-radius:12px;background:#3474b8;box-shadow:inset 0 1px 1px #2a5a90, 0 1px 0 #6a9ad4"></div>
<svg class="ab" style="left:1722px;top:35px" width="14" height="14"><circle cx="5.5" cy="5.5" r="4.2" fill="none" stroke="#fff" stroke-width="2"/><path d="M8.5 8.5 L12.5 12.5" stroke="#fff" stroke-width="2.4" stroke-linecap="round"/></svg>
<div class="t" style="left:1744px;top:35px;color:#9cc0e6">单据条码搜索</div>
<div class="ab" style="left:482px;top:60px;width:1426px;height:75px;background:#f6fafd;border-bottom:1px solid #b8cce4"></div>
<div class="ab" style="left:551px;top:62px;width:1px;height:71px;background:#c8ccd2"></div>
<div class="ab" style="left:718px;top:62px;width:1px;height:71px;background:#c8ccd2"></div>
<div class="ab" style="left:942px;top:62px;width:1px;height:71px;background:#c8ccd2"></div>
<div class="ab" style="left:988px;top:62px;width:1px;height:71px;background:#c8ccd2"></div>
<div class="ab" style="left:1034px;top:62px;width:1px;height:71px;background:#c8ccd2"></div>
<div class="ab" style="left:1097px;top:62px;width:1px;height:71px;background:#c8ccd2"></div>
<div class="ab" style="left:1178px;top:62px;width:1px;height:71px;background:#c8ccd2"></div>
<div class="ab" style="left:1224px;top:62px;width:1px;height:71px;background:#c8ccd2"></div>
<div class="ab" style="left:1287px;top:62px;width:1px;height:71px;background:#c8ccd2"></div>
<svg width="0" height="0" style="position:absolute"><defs>
<linearGradient id="docg" x1="0" y1="0" x2="1" y2="1"><stop offset="0" stop-color="#ffffff"/><stop offset="1" stop-color="#c6d8ee"/></linearGradient>
<linearGradient id="grayd" x1="0" y1="0" x2="1" y2="1"><stop offset="0" stop-color="#fafafa"/><stop offset=".6" stop-color="#d6d8da"/><stop offset="1" stop-color="#f0f0f0"/></linearGradient>
<radialGradient id="lens" cx=".5" cy=".35" r=".6"><stop offset="0" stop-color="#eef4fc"/><stop offset="1" stop-color="#8eb0e0"/></radialGradient>
<linearGradient id="gearg" x1="0" y1="0" x2="0" y2="1"><stop offset="0" stop-color="#f2f2f6"/><stop offset="1" stop-color="#a8a8b4"/></linearGradient>
<linearGradient id="funl" x1="0" y1="0" x2="1" y2="0"><stop offset="0" stop-color="#e8e8f4"/><stop offset=".5" stop-color="#9a9ac8"/><stop offset="1" stop-color="#5a5a98"/></linearGradient>
<linearGradient id="ext" x1="0" y1="0" x2="0" y2="1"><stop offset="0" stop-color="#d6eaf6"/><stop offset="1" stop-color="#b4d4ec"/></linearGradient>
<radialGradient id="plus" cx=".4" cy=".35" r=".7"><stop offset="0" stop-color="#a8e050"/><stop offset="1" stop-color="#3a9a10"/></radialGradient>
<linearGradient id="ruler" x1="0" y1="0" x2="0" y2="1"><stop offset="0" stop-color="#ffd050"/><stop offset="1" stop-color="#f0a010"/></linearGradient>
</defs></svg>
<svg class="ab" style="left:487px;top:66px" width="17" height="16"><rect x="4" y="0.5" width="8" height="5" fill="#fff" stroke="#3a88d8"/>
<rect x="0.5" y="4.5" width="15" height="7" rx="1.5" fill="#b8bcc0" stroke="#6a6e72"/>
<rect x="1" y="7" width="14" height="2" fill="#6a6e72"/>
<rect x="4" y="10.5" width="8" height="4.5" fill="#e8f4ff" stroke="#3a88d8"/></svg>
<svg class="ab" style="left:487px;top:88px" width="17" height="16"><path d="M3.5 0.5 H11.5 V14.5 H1.5 V3 Z" fill="url(#grayd)" stroke="#8a9aaa"/>
<path d="M7 7 H11 V4.5 L15.5 8.5 L11 12.5 V10 H7 Z" fill="#30c030" stroke="#1a9a1a" stroke-width=".6"/></svg>
<svg class="ab" style="left:487px;top:110px" width="17" height="16"><circle cx="6.5" cy="7.5" r="6.5" fill="#4a9ae0"/><circle cx="5" cy="5" r="3.5" fill="#9ad0f8" opacity=".7"/>
<path d="M3 6 Q5 4 7 6 L6 9 Z" fill="#e8f0f0" opacity=".8"/>
<path d="M11.5 8 L15.5 12 H13 V15.5 H10 V12 H7.5 Z" fill="#60c020" stroke="#3a8a10" stroke-width=".6"/></svg>
<svg class="ab" style="left:561px;top:65px" width="31" height="32"><path d="M6.5 0.5 H26 V28.5 H0.5 V6.5 Z" fill="url(#docg)" stroke="#6a90c0"/>
<path d="M0.5 6.5 H6.5 V0.5" fill="#dfe8f4" stroke="#8aa8d0" stroke-width=".6"/>
<path d="M9 5.5 H23 M5 9.5 H23 M4 12.5 H8 M4 15.5 H8 M4 18.5 H8 M4 21.5 H8 M4 24.5 H10" stroke="#9ab8e0" stroke-width="1.2"/>
<path d="M21 22 L28.5 29.5" stroke="#3a6aa0" stroke-width="3.2" stroke-linecap="round"/>
<circle cx="16.5" cy="18" r="7" fill="url(#lens)" stroke="#3a5a90" stroke-width="1.3"/></svg>
<svg class="ab" style="left:611px;top:64px" width="32" height="32"><path d="M6.5 0.5 H26 V28.5 H0.5 V6.5 Z" fill="url(#docg)" stroke="#6a90c0"/>
<path d="M0.5 6.5 H6.5 V0.5" fill="#dfe8f4" stroke="#8aa8d0" stroke-width=".6"/>
<path d="M9 5.5 H23 M4 9.5 H23 M4 12.5 H22 M4 15.5 H14 M4 18.5 H14 M4 21.5 H14 M4 24.5 H14" stroke="#9ab8e0" stroke-width="1.2"/><polygon points="21.00,14.80 22.60,14.96 23.37,17.27 24.44,17.84 26.80,17.20 27.82,18.44 26.73,20.63 27.08,21.79 29.20,23.00 29.04,24.60 26.73,25.37 26.16,26.44 26.80,28.80 25.56,29.82 23.37,28.73 22.21,29.08 21.00,31.20 19.40,31.04 18.63,28.73 17.56,28.16 15.20,28.80 14.18,27.56 15.27,25.37 14.92,24.21 12.80,23.00 12.96,21.40 15.27,20.63 15.84,19.56 15.20,17.20 16.44,16.18 18.63,17.27 19.79,16.92" fill="url(#gearg)" stroke="#9a9aa8" stroke-width=".7"/><circle cx="21" cy="23" r="2.6" fill="#f6fafd" stroke="#9a9aa8" stroke-width=".8"/></svg>
<svg class="ab" style="left:658px;top:66px" width="16" height="16"><path d="M3.5 0.5 H12.5 V14.5 H0.5 V3.5 Z" fill="url(#docg)" stroke="#8aa0b8"/>
<path d="M4 3.5 H10 M4 12 H10" stroke="#9ab8e0"/>
<rect x="2.5" y="6" width="5" height="4" fill="#e88a20"/>
<path d="M8 8 L11 5.5 V7 H15 V9 H11 V10.5 Z" fill="#58a8e8" stroke="#2a78c0" stroke-width=".5"/></svg>
<svg class="ab" style="left:657px;top:88px" width="17" height="16"><path d="M0.5 0.5 H13 L8.5 6.5 V14.5 L5.5 12 V6.5 Z" fill="url(#funl)" stroke="#6a6aa8" stroke-width=".6"/>
<path d="M9 10.5 H16 M9 13.5 H16" stroke="#5a6aa8" stroke-width="1.1"/></svg>
<svg class="ab" style="left:659px;top:111px" width="14" height="15"><path d="M0.5 0.5 H13 L8.5 6.5 V14.5 L5.5 12 V6.5 Z" fill="url(#funl)" stroke="#6a6aa8" stroke-width=".6"/></svg>
<svg class="ab" style="left:727px;top:64px" width="31" height="31"><rect x="0.5" y="0.5" width="29" height="29" rx="2" fill="#fbfbfb" stroke="#5a88c8"/>
<rect x="1" y="1" width="28" height="5" fill="#8ab0e4"/>
<rect x="1" y="6" width="28" height="23" fill="#f2f2f0"/>
<rect x="4.5" y="7.5" width="8" height="8" rx="1.5" fill="#a6c4ec" stroke="#5a88c8"/>
<rect x="17.5" y="7.5" width="8" height="8" rx="1.5" fill="#a6c4ec" stroke="#5a88c8"/>
<rect x="4.5" y="18.5" width="8" height="8" rx="1.5" fill="#a6c4ec" stroke="#5a88c8"/>
<rect x="17.5" y="18.5" width="8" height="8" rx="1.5" fill="#a6c4ec" stroke="#5a88c8"/></svg>
<svg class="ab" style="left:765px;top:66px" width="17" height="17"><rect x="0" y="0" width="16" height="16" fill="#ffffff"/>
<path d="M0 0 H16 V3 H3 V16 H0 Z" fill="#88c0f0"/>
<path d="M13 3 H16 V16 H13 Z M3 6 H13 V8 H3 Z" fill="#6ac060"/>
<path d="M0.5 0.5 H15.5 V15.5 H0.5 Z M0 4.5 H16 M0 8.5 H16 M0 12.5 H16 M4.5 0 V16 M8.5 0 V16 M12.5 0 V16" fill="none" stroke="#c8d8e8" stroke-width=".6"/>
<path d="M1 6 H6 V4 L10 7.5 L6 11 V9 H1 Z" fill="#58a0e0" stroke="#2a70c0" stroke-width=".5"/></svg>
<svg class="ab" style="left:765px;top:88px" width="17" height="17"><path d="M0.5 7.5 L3.5 0.5 H5.5 L8.5 7.5 H6.3 L5.8 6 H3.2 L2.7 7.5 Z M3.7 4.3 H5.3 L4.5 2 Z" fill="#f09020"/>
<path d="M0.8 9 H8 V10.8 L3.8 14.2 H8.2 V16 H0.5 V14.2 L4.7 10.8 H0.8 Z" fill="#3a8ae0"/>
<path d="M12 0.5 V14 M9.3 10.5 L12 15 L14.7 10.5" stroke="#4a9ae8" stroke-width="1.6" fill="none"/><path d="M10.5 0.5 V13" stroke="#b8d8f8" stroke-width=".8"/></svg>
<svg class="ab" style="left:765px;top:110px" width="17" height="17"><path d="M1.5 3.5 H9 L12 6.5 V15.5 H1.5 Z" fill="#eaf0f8" stroke="#6a90c0"/>
<rect x="0" y="2" width="7" height="3" fill="#5a9ae0"/>
<rect x="7.5" y="9.5" width="8" height="6.5" fill="#fff" stroke="#2a68b8"/>
<rect x="9.5" y="9.5" width="4" height="2.5" fill="#2a68b8"/></svg>
<svg class="ab" style="left:857px;top:88px" width="17" height="16"><path d="M0.5 1 V4 M15.5 1 V4 M3 2.5 H13" stroke="#3a5a90" stroke-width="1" stroke-dasharray="1 1"/>
<rect x="0.5" y="4.5" width="15" height="11" fill="#e8f0fc" stroke="#7aa2d8"/>
<rect x="5.5" y="4.5" width="5" height="11" fill="#d0f0c0" stroke="#3a9a30"/></svg>
<svg class="ab" style="left:857px;top:110px" width="17" height="17"><polygon points="8.00,0.40 9.48,0.55 10.14,2.83 11.11,3.34 13.37,2.63 14.32,3.78 13.17,5.86 13.49,6.91 15.60,8.00 15.45,9.48 13.17,10.14 12.66,11.11 13.37,13.37 12.22,14.32 10.14,13.17 9.09,13.49 8.00,15.60 6.52,15.45 5.86,13.17 4.89,12.66 2.63,13.37 1.68,12.22 2.83,10.14 2.51,9.09 0.40,8.00 0.55,6.52 2.83,5.86 3.34,4.89 2.63,2.63 3.78,1.68 5.86,2.83 6.91,2.51" fill="url(#gearg)" stroke="#9a9aa8" stroke-width=".7"/><circle cx="8" cy="8" r="2.8" fill="#f6fafd" stroke="#9a9aa8" stroke-width=".8"/></svg>
<svg class="ab" style="left:951px;top:65px" width="32" height="32"><path d="M6.5 0.5 H26 V28.5 H0.5 V6.5 Z" fill="url(#grayd)" stroke="#a0a4a8"/>
<path d="M0.5 6.5 H6.5 V0.5" fill="#f4f4f4" stroke="#b0b4b8" stroke-width=".6"/>
<rect x="7" y="22.5" width="10" height="7" rx="3.5" fill="none" stroke="#666" stroke-width="2.2"/>
<rect x="20" y="22.5" width="10" height="7" rx="3.5" fill="none" stroke="#666" stroke-width="2.2"/>
<path d="M12 26 H25" stroke="#666" stroke-width="2.2"/></svg>
<svg class="ab" style="left:997px;top:66px" width="31" height="29"><rect x="0.5" y="0.5" width="29" height="27" fill="#f6faf8" stroke="#3a9a80"/>
<rect x="4" y="3.5" width="9" height="9" fill="#c8e4dc" stroke="#5aa890" stroke-width=".7"/>
<rect x="16" y="3.5" width="11" height="9" fill="#c8e4dc" stroke="#5aa890" stroke-width=".7"/>
<rect x="4" y="15" width="9" height="10" fill="#c8e4dc" stroke="#5aa890" stroke-width=".7"/>
<path d="M0.5 27.5 L29.5 4 V27.5 Z" fill="url(#ruler)" stroke="#b06a10" stroke-width=".8"/>
<path d="M14 24 L26 14.5 V24 Z" fill="#c8e4dc" stroke="#b06a10" stroke-width=".8"/></svg>
<svg class="ab" style="left:1051px;top:66px" width="30" height="30"><rect x="0.5" y="0.5" width="27" height="24" fill="#f0f4fc" stroke="#9ab0d8"/>
<path d="M0 6.5 H28 M0 12.5 H28 M0 18.5 H28 M7.5 0 V25 M20.5 0 V25" stroke="#a8bce0" stroke-width=".8"/>
<rect x="8" y="1" width="10" height="5" fill="#5a9ae8"/>
<rect x="8" y="7" width="8" height="5" fill="#f8b050"/>
<rect x="8" y="13" width="12" height="5" fill="#6aa6ec"/>
<rect x="8" y="19" width="8" height="5.5" fill="#f8b050"/>
<rect x="14.5" y="15.5" width="14" height="13" rx="1" fill="#eaf2fc" stroke="#7a9ad0"/>
<text x="17" y="26" font-family="Liberation Sans" font-weight="bold" font-size="10" fill="#2a5a98">if</text></svg>
<svg class="ab" style="left:1190px;top:67px" width="24" height="27"><rect x="0.5" y="8.5" width="6" height="17" fill="#8ab8f8" stroke="#4a7ac8" stroke-width=".8"/>
<rect x="8.5" y="0.5" width="6" height="25" fill="#f8b870" stroke="#c87a40" stroke-width=".8"/>
<rect x="16.5" y="5.5" width="6" height="20" fill="#c8ccd0" stroke="#8a9098" stroke-width=".8"/></svg>
<svg class="ab" style="left:1242px;top:63px" width="30" height="31"><path d="M0.5 0.5 H17 L23.5 7 V27.5 H0.5 Z" fill="url(#ext)" stroke="#1a78c8" stroke-width="1.2"/>
<path d="M17 0.5 V7 H23.5" fill="#fff" stroke="#1a78c8" stroke-width="1"/>
<circle cx="21" cy="22.5" r="7" fill="url(#plus)" stroke="#2a8a10" stroke-width=".6"/>
<path d="M21 18.5 V26.5 M17 22.5 H25" stroke="#fff" stroke-width="2.4"/></svg>
<div class="t" style="left:506px;top:67px;color:#2a2a2a">打印</div>
<svg class="ab" style="left:539px;top:72px" width="6" height="4"><path d="M0 0 H5 L2.5 3 Z" fill="#5a5a5a"/></svg>
<div class="t" style="left:506px;top:89px;color:#2a2a2a">输出</div>
<div class="t" style="left:506px;top:111px;color:#2a2a2a">发布</div>
<div class="t" style="left:676px;top:67px;color:#2a2a2a">定位</div>
<div class="t" style="left:676px;top:89px;color:#2a2a2a">筛选</div>
<svg class="ab" style="left:708px;top:94px" width="6" height="4"><path d="M0 0 H5 L2.5 3 Z" fill="#5a5a5a"/></svg>
<div class="t" style="left:676px;top:111px;color:#2a2a2a">过滤</div>
<div class="t" style="left:784px;top:67px;color:#2a2a2a">分组/交叉</div>
<svg class="ab" style="left:846px;top:72px" width="6" height="4"><path d="M0 0 H5 L2.5 3 Z" fill="#5a5a5a"/></svg>
<div class="t" style="left:785px;top:89px;color:#2a2a2a">自定义排序</div>
<div class="t" style="left:784px;top:111px;color:#2a2a2a">保存格式</div>
<div class="ab" style="left:859px;top:68px;width:12px;height:12px;border:1px solid #c0c4c8;border-radius:2px;background:linear-gradient(#fff,#eee)"></div>
<div class="t" style="left:877px;top:67px;color:#2a2a2a">自动换行</div>
<div class="t" style="left:875px;top:89px;color:#2a2a2a">列格式</div>
<svg class="ab" style="left:920px;top:94px" width="6" height="4"><path d="M0 0 H5 L2.5 3 Z" fill="#5a5a5a"/></svg>
<div class="t" style="left:876px;top:111px;color:#2a2a2a">更多设置</div>
<svg class="ab" style="left:932px;top:116px" width="6" height="4"><path d="M0 0 H5 L2.5 3 Z" fill="#5a5a5a"/></svg>
<div class="t" style="left:562px;top:101px;color:#2a2a2a">查询</div>
<svg class="ab" style="left:572px;top:121px" width="6" height="4"><path d="M0 0 H5 L2.5 3 Z" fill="#5a5a5a"/></svg>
<div class="t" style="left:601px;top:101px;color:#2a2a2a">管理方案</div>
<div class="t" style="left:728px;top:101px;color:#2a2a2a">视图</div>
<svg class="ab" style="left:739px;top:118px" width="6" height="4"><path d="M0 0 H5 L2.5 3 Z" fill="#5a5a5a"/></svg>
<div class="t" style="left:953px;top:101px;color:#2a2a2a">联查</div>
<svg class="ab" style="left:963px;top:118px" width="6" height="4"><path d="M0 0 H5 L2.5 3 Z" fill="#5a5a5a"/></svg>
<div class="t" style="left:998px;top:101px;color:#2a2a2a">布局</div>
<svg class="ab" style="left:1009px;top:118px" width="6" height="4"><path d="M0 0 H5 L2.5 3 Z" fill="#5a5a5a"/></svg>
<div class="t" style="left:1042px;top:101px;color:#2a2a2a">条件格式</div>
<svg class="ab" style="left:1063px;top:118px" width="6" height="4"><path d="M0 0 H5 L2.5 3 Z" fill="#5a5a5a"/></svg>
<div class="t" style="left:1189px;top:101px;color:#2a2a2a">图表</div>
<svg class="ab" style="left:1199px;top:118px" width="6" height="4"><path d="M0 0 H5 L2.5 3 Z" fill="#5a5a5a"/></svg>
<div class="t" style="left:1232px;top:101px;color:#2a2a2a">扩展功能</div>
<svg class="ab" style="left:1253px;top:118px" width="6" height="4"><path d="M0 0 H5 L2.5 3 Z" fill="#5a5a5a"/></svg>
<div class="ab" style="left:1104px;top:68px;width:12px;height:12px;border:1px solid #c0c4c8;border-radius:2px;background:linear-gradient(#fff,#eee)"></div>
<div class="t" style="left:1121px;top:67px;color:#2a2a2a">显示小计</div>
<div class="ab" style="left:1104px;top:90px;width:12px;height:12px;border:1px solid #c0c4c8;border-radius:2px;background:linear-gradient(#fff,#eee)"></div>
<svg class="ab" style="left:1105px;top:91px" width="10" height="10"><path d="M2 5 L4.2 7.5 L8.5 2" stroke="#555" stroke-width="1.5" fill="none"/></svg>
<div class="t" style="left:1121px;top:89px;color:#2a2a2a">显示总计</div>
<div class="ab" style="left:1104px;top:112px;width:12px;height:12px;border:1px solid #c0c4c8;border-radius:2px;background:linear-gradient(#fff,#eee)"></div>
<div class="t" style="left:1121px;top:111px;color:#2a2a2a">导航窗格</div>
<div class="ab" style="left:482px;top:135px;width:1426px;height:50px;background:#ebf3fc;border-bottom:1px solid #b8cce4"></div>
<div class="t" style="left:1116px;top:149px;color:#111;font-size:20px;font-weight:bold;line-height:22px">在产品成本汇总表</div>
<div class="ab" style="left:493px;top:197px;width:1404px;height:41px;border:1px solid #b4c8e0;border-radius:5px;background:#f8fbff"></div>
<div class="t" style="left:519px;top:206px;color:#111">您尚未添加查询方案及快捷条件，请点击<span class=m> "</span>更多<span class=m>&gt;&gt;" </span>进行高级查询<span class=m>!</span></div>
<div class="ab" style="left:1742px;top:206px;width:60px;height:22px;border:1px solid #a0a0a0;border-radius:3px;background:linear-gradient(#fff,#e6e6e6);text-align:center;line-height:21px;color:#222">查询</div>
<div class="t" style="left:1817px;top:211px;color:#1a6ae0;text-decoration:underline">更多<span class=m style="letter-spacing:1px">&gt;&gt;</span></div>
<div class="ab" style="left:492px;top:249px;width:1406px;height:479px;border:1px solid #b4c8e0;border-radius:4px;background:#fff"></div>
<div class="ab" style="left:494px;top:251px;width:1386px;height:35px;background:#dfeafa;border-bottom:1px solid #1f55a8"></div>
<div class="ab" style="left:499px;top:251px;width:1px;height:35px;background:#1f55a8"></div>
<div class="t" style="left:500px;top:260px;width:92px;text-align:center;color:#111">订单类别说明</div>
<div class="ab" style="left:591px;top:251px;width:1px;height:35px;background:#1f55a8"></div>
<div class="t" style="left:592px;top:260px;width:92px;text-align:center;color:#111">工序属性</div>
<div class="ab" style="left:683px;top:251px;width:1px;height:35px;background:#1f55a8"></div>
<div class="t" style="left:684px;top:260px;width:92px;text-align:center;color:#111">维修订单属性</div>
<div class="ab" style="left:775px;top:251px;width:1px;height:35px;background:#1f55a8"></div>
<div class="t" style="left:776px;top:260px;width:92px;text-align:center;color:#111">主计量单位</div>
<div class="ab" style="left:867px;top:251px;width:1px;height:35px;background:#1f55a8"></div>
<div class="t" style="left:868px;top:260px;width:92px;text-align:center;color:#111">辅计量单位</div>
<div class="ab" style="left:959px;top:251px;width:1px;height:35px;background:#1f55a8"></div>
<div class="t" style="left:960px;top:260px;width:92px;text-align:center;color:#111">辅计量产量</div>
<div class="ab" style="left:1051px;top:251px;width:1px;height:35px;background:#1f55a8"></div>
<div class="t" style="left:1052px;top:260px;width:92px;text-align:center;color:#111">换算率</div>
<div class="ab" style="left:1143px;top:251px;width:1px;height:35px;background:#1f55a8"></div>
<div class="t" style="left:1144px;top:260px;width:92px;text-align:center;color:#111">主计量产量</div>
<div class="ab" style="left:1235px;top:251px;width:1px;height:35px;background:#1f55a8"></div>
<div class="t" style="left:1236px;top:260px;width:92px;text-align:center;color:#111">材料费用</div>
<div class="ab" style="left:1327px;top:251px;width:1px;height:35px;background:#1f55a8"></div>
<div class="t" style="left:1328px;top:260px;width:92px;text-align:center;color:#111">人工费用</div>
<div class="ab" style="left:1419px;top:251px;width:1px;height:35px;background:#1f55a8"></div>
<div class="t" style="left:1420px;top:260px;width:92px;text-align:center;color:#111">辅助费用</div>
<div class="ab" style="left:1511px;top:251px;width:1px;height:35px;background:#1f55a8"></div>
<div class="t" style="left:1512px;top:260px;width:92px;text-align:center;color:#111">制造费用</div>
<div class="ab" style="left:1603px;top:251px;width:1px;height:35px;background:#1f55a8"></div>
<div class="t" style="left:1604px;top:260px;width:92px;text-align:center;color:#111">其他费用</div>
<div class="ab" style="left:1695px;top:251px;width:1px;height:35px;background:#1f55a8"></div>
<div class="t" style="left:1696px;top:260px;width:92px;text-align:center;color:#111">总成本</div>
<div class="ab" style="left:1787px;top:251px;width:1px;height:35px;background:#1f55a8"></div>
<div class="t" style="left:1787px;top:253px;width:92px;text-align:center;color:#111;line-height:14px">主计量单位成<br>本</div>
<div class="ab" style="left:1879px;top:251px;width:1px;height:35px;background:#1f55a8"></div>
<div class="ab" style="left:494px;top:286px;width:1386px;height:24px;background:#f4f4f4;border-bottom:1px solid #a6a6a6"></div>
<div class="t" style="left:597px;top:286px;color:#000">自制</div>
<div class="t" style="left:689px;top:286px;color:#000">否</div>
<div class="t" style="left:781px;top:286px;color:#000">个</div>
<div class="t num" style="left:959px;top:287px;width:88px;text-align:right;color:#000">120<span class=p>.</span>00</div>
<div class="t num" style="left:1051px;top:287px;width:88px;text-align:right;color:#000">1<span class=p>.</span>00</div>
<div class="t num" style="left:1143px;top:287px;width:88px;text-align:right;color:#000">120<span class=p>.</span>00</div>
<div class="t num" style="left:1235px;top:287px;width:88px;text-align:right;color:#000">28<span class=p>.</span>68</div>
<div class="t num" style="left:1327px;top:287px;width:88px;text-align:right;color:#000">0<span class=p>.</span>00</div>
<div class="t num" style="left:1419px;top:287px;width:88px;text-align:right;color:#000">0<span class=p>.</span>00</div>
<div class="t num" style="left:1511px;top:287px;width:88px;text-align:right;color:#000">0<span class=p>.</span>00</div>
<div class="t num" style="left:1603px;top:287px;width:88px;text-align:right;color:#000">0<span class=p>.</span>00</div>
<div class="t num" style="left:1695px;top:287px;width:88px;text-align:right;color:#000">28<span class=p>.</span>68</div>
<div class="t num" style="left:1787px;top:287px;width:88px;text-align:right;color:#000">0<span class=p>.</span>24</div>
<div class="ab" style="left:494px;top:310px;width:1386px;height:24px;background:#fff;border-bottom:1px solid #a6a6a6"></div>
<div class="t" style="left:505px;top:310px;color:#000">有工序流转<span class=ell></span></div>
<div class="t" style="left:597px;top:310px;color:#000">自制</div>
<div class="t" style="left:689px;top:310px;color:#000">否</div>
<div class="t" style="left:781px;top:310px;color:#000">个</div>
<div class="t num" style="left:959px;top:311px;width:88px;text-align:right;color:#000">100<span class=p>.</span>00</div>
<div class="t num" style="left:1051px;top:311px;width:88px;text-align:right;color:#000">1<span class=p>.</span>00</div>
<div class="t num" style="left:1143px;top:311px;width:88px;text-align:right;color:#000">100<span class=p>.</span>00</div>
<div class="t num" style="left:1235px;top:311px;width:88px;text-align:right;color:#000">23<span class=p>.</span>91</div>
<div class="t num" style="left:1327px;top:311px;width:88px;text-align:right;color:#000">0<span class=p>.</span>00</div>
<div class="t num" style="left:1419px;top:311px;width:88px;text-align:right;color:#000">0<span class=p>.</span>00</div>
<div class="t num" style="left:1511px;top:311px;width:88px;text-align:right;color:#000">0<span class=p>.</span>00</div>
<div class="t num" style="left:1603px;top:311px;width:88px;text-align:right;color:#000">0<span class=p>.</span>00</div>
<div class="t num" style="left:1695px;top:311px;width:88px;text-align:right;color:#000">23<span class=p>.</span>91</div>
<div class="t num" style="left:1787px;top:311px;width:88px;text-align:right;color:#000">0<span class=p>.</span>24</div>
<div class="ab" style="left:494px;top:334px;width:1386px;height:24px;background:#f4f4f4;border-bottom:1px solid #a6a6a6"></div>
<div class="t" style="left:505px;top:334px;color:#000">按工序生产</div>
<div class="t" style="left:597px;top:334px;color:#000">自制</div>
<div class="t" style="left:689px;top:334px;color:#000">否</div>
<div class="t" style="left:781px;top:334px;color:#000">个</div>
<div class="t num" style="left:959px;top:335px;width:88px;text-align:right;color:#000">500<span class=p>.</span>00</div>
<div class="t num" style="left:1051px;top:335px;width:88px;text-align:right;color:#000">1<span class=p>.</span>00</div>
<div class="t num" style="left:1143px;top:335px;width:88px;text-align:right;color:#000">500<span class=p>.</span>00</div>
<div class="t num" style="left:1235px;top:335px;width:88px;text-align:right;color:#000">119<span class=p>.</span>48</div>
<div class="t num" style="left:1327px;top:335px;width:88px;text-align:right;color:#000">0<span class=p>.</span>00</div>
<div class="t num" style="left:1419px;top:335px;width:88px;text-align:right;color:#000">0<span class=p>.</span>00</div>
<div class="t num" style="left:1511px;top:335px;width:88px;text-align:right;color:#000">0<span class=p>.</span>00</div>
<div class="t num" style="left:1603px;top:335px;width:88px;text-align:right;color:#000">0<span class=p>.</span>00</div>
<div class="t num" style="left:1695px;top:335px;width:88px;text-align:right;color:#000">119<span class=p>.</span>48</div>
<div class="t num" style="left:1787px;top:335px;width:88px;text-align:right;color:#000">0<span class=p>.</span>24</div>
<div class="ab" style="left:494px;top:358px;width:1386px;height:24px;background:#fff;border-bottom:1px solid #a6a6a6"></div>
<div class="t" style="left:597px;top:358px;color:#000">自制</div>
<div class="t" style="left:689px;top:358px;color:#000">否</div>
<div class="t" style="left:781px;top:358px;color:#000">个</div>
<div class="t num" style="left:959px;top:359px;width:88px;text-align:right;color:#000">1<span class=p>,</span>000<span class=p>.</span>00</div>
<div class="t num" style="left:1051px;top:359px;width:88px;text-align:right;color:#000">1<span class=p>.</span>00</div>
<div class="t num" style="left:1143px;top:359px;width:88px;text-align:right;color:#000">1<span class=p>,</span>000<span class=p>.</span>00</div>
<div class="t num" style="left:1235px;top:359px;width:88px;text-align:right;color:#000">238<span class=p>.</span>97</div>
<div class="t num" style="left:1327px;top:359px;width:88px;text-align:right;color:#000">0<span class=p>.</span>00</div>
<div class="t num" style="left:1419px;top:359px;width:88px;text-align:right;color:#000">0<span class=p>.</span>00</div>
<div class="t num" style="left:1511px;top:359px;width:88px;text-align:right;color:#000">0<span class=p>.</span>00</div>
<div class="t num" style="left:1603px;top:359px;width:88px;text-align:right;color:#000">0<span class=p>.</span>00</div>
<div class="t num" style="left:1695px;top:359px;width:88px;text-align:right;color:#000">238<span class=p>.</span>97</div>
<div class="t num" style="left:1787px;top:359px;width:88px;text-align:right;color:#000">0<span class=p>.</span>24</div>
<div class="ab" style="left:494px;top:382px;width:1386px;height:24px;background:#f4f4f4;border-bottom:1px solid #a6a6a6"></div>
<div class="t" style="left:597px;top:382px;color:#000">自制</div>
<div class="t" style="left:689px;top:382px;color:#000">否</div>
<div class="t" style="left:781px;top:382px;color:#000">个</div>
<div class="t num" style="left:959px;top:383px;width:88px;text-align:right;color:#000">1<span class=p>,</span>000<span class=p>.</span>00</div>
<div class="t num" style="left:1051px;top:383px;width:88px;text-align:right;color:#000">1<span class=p>.</span>00</div>
<div class="t num" style="left:1143px;top:383px;width:88px;text-align:right;color:#000">1<span class=p>,</span>000<span class=p>.</span>00</div>
<div class="t num" style="left:1235px;top:383px;width:88px;text-align:right;color:#000">238<span class=p>.</span>95</div>
<div class="t num" style="left:1327px;top:383px;width:88px;text-align:right;color:#000">0<span class=p>.</span>00</div>
<div class="t num" style="left:1419px;top:383px;width:88px;text-align:right;color:#000">0<span class=p>.</span>00</div>
<div class="t num" style="left:1511px;top:383px;width:88px;text-align:right;color:#000">0<span class=p>.</span>00</div>
<div class="t num" style="left:1603px;top:383px;width:88px;text-align:right;color:#000">0<span class=p>.</span>00</div>
<div class="t num" style="left:1695px;top:383px;width:88px;text-align:right;color:#000">238<span class=p>.</span>95</div>
<div class="t num" style="left:1787px;top:383px;width:88px;text-align:right;color:#000">0<span class=p>.</span>24</div>
<div class="ab" style="left:494px;top:406px;width:1386px;height:24px;background:#fff;border-bottom:1px solid #a6a6a6"></div>
<div class="t" style="left:597px;top:406px;color:#000">自制</div>
<div class="t" style="left:689px;top:406px;color:#000">否</div>
<div class="t" style="left:781px;top:406px;color:#000">个</div>
<div class="t num" style="left:959px;top:407px;width:88px;text-align:right;color:#000">1<span class=p>,</span>000<span class=p>.</span>00</div>
<div class="t num" style="left:1051px;top:407px;width:88px;text-align:right;color:#000">1<span class=p>.</span>00</div>
<div class="t num" style="left:1143px;top:407px;width:88px;text-align:right;color:#000">1<span class=p>,</span>000<span class=p>.</span>00</div>
<div class="t num" style="left:1235px;top:407px;width:88px;text-align:right;color:#000">238<span class=p>.</span>97</div>
<div class="t num" style="left:1327px;top:407px;width:88px;text-align:right;color:#000">0<span class=p>.</span>00</div>
<div class="t num" style="left:1419px;top:407px;width:88px;text-align:right;color:#000">0<span class=p>.</span>00</div>
<div class="t num" style="left:1511px;top:407px;width:88px;text-align:right;color:#000">0<span class=p>.</span>00</div>
<div class="t num" style="left:1603px;top:407px;width:88px;text-align:right;color:#000">0<span class=p>.</span>00</div>
<div class="t num" style="left:1695px;top:407px;width:88px;text-align:right;color:#000">238<span class=p>.</span>97</div>
<div class="t num" style="left:1787px;top:407px;width:88px;text-align:right;color:#000">0<span class=p>.</span>24</div>
<div class="ab" style="left:494px;top:430px;width:1386px;height:24px;background:#f4f4f4;border-bottom:1px solid #a6a6a6"></div>
<div class="t" style="left:597px;top:430px;color:#000">自制</div>
<div class="t" style="left:689px;top:430px;color:#000">否</div>
<div class="t" style="left:781px;top:430px;color:#000">个</div>
<div class="t num" style="left:959px;top:431px;width:88px;text-align:right;color:#000">100<span class=p>.</span>00</div>
<div class="t num" style="left:1051px;top:431px;width:88px;text-align:right;color:#000">1<span class=p>.</span>00</div>
<div class="t num" style="left:1143px;top:431px;width:88px;text-align:right;color:#000">100<span class=p>.</span>00</div>
<div class="t num" style="left:1235px;top:431px;width:88px;text-align:right;color:#000">23<span class=p>.</span>89</div>
<div class="t num" style="left:1327px;top:431px;width:88px;text-align:right;color:#000">0<span class=p>.</span>00</div>
<div class="t num" style="left:1419px;top:431px;width:88px;text-align:right;color:#000">0<span class=p>.</span>00</div>
<div class="t num" style="left:1511px;top:431px;width:88px;text-align:right;color:#000">0<span class=p>.</span>00</div>
<div class="t num" style="left:1603px;top:431px;width:88px;text-align:right;color:#000">0<span class=p>.</span>00</div>
<div class="t num" style="left:1695px;top:431px;width:88px;text-align:right;color:#000">23<span class=p>.</span>89</div>
<div class="t num" style="left:1787px;top:431px;width:88px;text-align:right;color:#000">0<span class=p>.</span>24</div>
<div class="ab" style="left:494px;top:454px;width:1386px;height:24px;background:#fff;border-bottom:1px solid #a6a6a6"></div>
<div class="t" style="left:597px;top:454px;color:#000">自制</div>
<div class="t" style="left:689px;top:454px;color:#000">否</div>
<div class="t" style="left:781px;top:454px;color:#000">个</div>
<div class="t num" style="left:959px;top:455px;width:88px;text-align:right;color:#000">5<span class=p>.</span>00</div>
<div class="t num" style="left:1051px;top:455px;width:88px;text-align:right;color:#000">1<span class=p>.</span>00</div>
<div class="t num" style="left:1143px;top:455px;width:88px;text-align:right;color:#000">5<span class=p>.</span>00</div>
<div class="t num" style="left:1235px;top:455px;width:88px;text-align:right;color:#000">1<span class=p>.</span>20</div>
<div class="t num" style="left:1327px;top:455px;width:88px;text-align:right;color:#000">0<span class=p>.</span>00</div>
<div class="t num" style="left:1419px;top:455px;width:88px;text-align:right;color:#000">0<span class=p>.</span>00</div>
<div class="t num" style="left:1511px;top:455px;width:88px;text-align:right;color:#000">0<span class=p>.</span>00</div>
<div class="t num" style="left:1603px;top:455px;width:88px;text-align:right;color:#000">0<span class=p>.</span>00</div>
<div class="t num" style="left:1695px;top:455px;width:88px;text-align:right;color:#000">1<span class=p>.</span>20</div>
<div class="t num" style="left:1787px;top:455px;width:88px;text-align:right;color:#000">0<span class=p>.</span>24</div>
<div class="ab" style="left:494px;top:478px;width:1386px;height:24px;background:#f4f4f4;border-bottom:1px solid #a6a6a6"></div>
<div class="t" style="left:597px;top:478px;color:#000">自制</div>
<div class="t" style="left:689px;top:478px;color:#000">否</div>
<div class="t" style="left:781px;top:478px;color:#000">个</div>
<div class="t num" style="left:959px;top:479px;width:88px;text-align:right;color:#000">900<span class=p>.</span>00</div>
<div class="t num" style="left:1051px;top:479px;width:88px;text-align:right;color:#000">1<span class=p>.</span>00</div>
<div class="t num" style="left:1143px;top:479px;width:88px;text-align:right;color:#000">900<span class=p>.</span>00</div>
<div class="t num" style="left:1235px;top:479px;width:88px;text-align:right;color:#000">2<span class=p>,</span>151<span class=p>.</span>00</div>
<div class="t num" style="left:1327px;top:479px;width:88px;text-align:right;color:#000">0<span class=p>.</span>00</div>
<div class="t num" style="left:1419px;top:479px;width:88px;text-align:right;color:#000">0<span class=p>.</span>00</div>
<div class="t num" style="left:1511px;top:479px;width:88px;text-align:right;color:#000">0<span class=p>.</span>00</div>
<div class="t num" style="left:1603px;top:479px;width:88px;text-align:right;color:#000">0<span class=p>.</span>00</div>
<div class="t num" style="left:1695px;top:479px;width:88px;text-align:right;color:#000">2<span class=p>,</span>151<span class=p>.</span>00</div>
<div class="t num" style="left:1787px;top:479px;width:88px;text-align:right;color:#000">2<span class=p>.</span>39</div>
<div class="ab" style="left:494px;top:502px;width:1386px;height:24px;background:#fff;border-bottom:1px solid #a6a6a6"></div>
<div class="t" style="left:597px;top:502px;color:#000">自制</div>
<div class="t" style="left:689px;top:502px;color:#000">否</div>
<div class="t" style="left:781px;top:502px;color:#000">个</div>
<div class="t num" style="left:959px;top:503px;width:88px;text-align:right;color:#000">1<span class=p>,</span>000<span class=p>.</span>00</div>
<div class="t num" style="left:1051px;top:503px;width:88px;text-align:right;color:#000">1<span class=p>.</span>00</div>
<div class="t num" style="left:1143px;top:503px;width:88px;text-align:right;color:#000">1<span class=p>,</span>000<span class=p>.</span>00</div>
<div class="t num" style="left:1235px;top:503px;width:88px;text-align:right;color:#000">2<span class=p>,</span>390<span class=p>.</span>00</div>
<div class="t num" style="left:1327px;top:503px;width:88px;text-align:right;color:#000">0<span class=p>.</span>00</div>
<div class="t num" style="left:1419px;top:503px;width:88px;text-align:right;color:#000">0<span class=p>.</span>00</div>
<div class="t num" style="left:1511px;top:503px;width:88px;text-align:right;color:#000">0<span class=p>.</span>00</div>
<div class="t num" style="left:1603px;top:503px;width:88px;text-align:right;color:#000">0<span class=p>.</span>00</div>
<div class="t num" style="left:1695px;top:503px;width:88px;text-align:right;color:#000">2<span class=p>,</span>390<span class=p>.</span>00</div>
<div class="t num" style="left:1787px;top:503px;width:88px;text-align:right;color:#000">2<span class=p>.</span>39</div>
<div class="ab" style="left:494px;top:526px;width:1386px;height:24px;background:#f4f4f4;border-bottom:1px solid #a6a6a6"></div>
<div class="t" style="left:505px;top:526px;color:#000">按工序生产</div>
<div class="t" style="left:597px;top:526px;color:#000">自制</div>
<div class="t" style="left:689px;top:526px;color:#000">否</div>
<div class="t" style="left:781px;top:526px;color:#000">个</div>
<div class="t num" style="left:959px;top:527px;width:88px;text-align:right;color:#000">450<span class=p>.</span>00</div>
<div class="t num" style="left:1051px;top:527px;width:88px;text-align:right;color:#000">1<span class=p>.</span>00</div>
<div class="t num" style="left:1143px;top:527px;width:88px;text-align:right;color:#000">450<span class=p>.</span>00</div>
<div class="t num" style="left:1235px;top:527px;width:88px;text-align:right;color:#000">1<span class=p>,</span>075<span class=p>.</span>50</div>
<div class="t num" style="left:1327px;top:527px;width:88px;text-align:right;color:#000">0<span class=p>.</span>00</div>
<div class="t num" style="left:1419px;top:527px;width:88px;text-align:right;color:#000">0<span class=p>.</span>00</div>
<div class="t num" style="left:1511px;top:527px;width:88px;text-align:right;color:#000">0<span class=p>.</span>00</div>
<div class="t num" style="left:1603px;top:527px;width:88px;text-align:right;color:#000">0<span class=p>.</span>00</div>
<div class="t num" style="left:1695px;top:527px;width:88px;text-align:right;color:#000">1<span class=p>,</span>075<span class=p>.</span>50</div>
<div class="t num" style="left:1787px;top:527px;width:88px;text-align:right;color:#000">2<span class=p>.</span>39</div>
<div class="ab" style="left:494px;top:550px;width:1386px;height:24px;background:#fff;border-bottom:1px solid #a6a6a6"></div>
<div class="t" style="left:505px;top:550px;color:#000">有工序质检<span class=ell></span></div>
<div class="t" style="left:597px;top:550px;color:#000">自制</div>
<div class="t" style="left:689px;top:550px;color:#000">否</div>
<div class="t" style="left:781px;top:550px;color:#000">个</div>
<div class="t num" style="left:959px;top:551px;width:88px;text-align:right;color:#000">200<span class=p>.</span>00</div>
<div class="t num" style="left:1051px;top:551px;width:88px;text-align:right;color:#000">1<span class=p>.</span>00</div>
<div class="t num" style="left:1143px;top:551px;width:88px;text-align:right;color:#000">200<span class=p>.</span>00</div>
<div class="t num" style="left:1235px;top:551px;width:88px;text-align:right;color:#000">47<span class=p>.</span>79</div>
<div class="t num" style="left:1327px;top:551px;width:88px;text-align:right;color:#000">0<span class=p>.</span>00</div>
<div class="t num" style="left:1419px;top:551px;width:88px;text-align:right;color:#000">0<span class=p>.</span>00</div>
<div class="t num" style="left:1511px;top:551px;width:88px;text-align:right;color:#000">0<span class=p>.</span>00</div>
<div class="t num" style="left:1603px;top:551px;width:88px;text-align:right;color:#000">0<span class=p>.</span>00</div>
<div class="t num" style="left:1695px;top:551px;width:88px;text-align:right;color:#000">47<span class=p>.</span>79</div>
<div class="t num" style="left:1787px;top:551px;width:88px;text-align:right;color:#000">0<span class=p>.</span>24</div>
<div class="ab" style="left:494px;top:574px;width:1386px;height:24px;background:#f4f4f4;border-bottom:1px solid #a6a6a6"></div>
<div class="t" style="left:597px;top:574px;color:#000">自制</div>
<div class="t" style="left:689px;top:574px;color:#000">否</div>
<div class="t" style="left:781px;top:574px;color:#000">个</div>
<div class="t num" style="left:959px;top:575px;width:88px;text-align:right;color:#000">800<span class=p>.</span>00</div>
<div class="t num" style="left:1051px;top:575px;width:88px;text-align:right;color:#000">1<span class=p>.</span>00</div>
<div class="t num" style="left:1143px;top:575px;width:88px;text-align:right;color:#000">800<span class=p>.</span>00</div>
<div class="t num" style="left:1235px;top:575px;width:88px;text-align:right;color:#000">2<span class=p>,</span>103<span class=p>.</span>17</div>
<div class="t num" style="left:1327px;top:575px;width:88px;text-align:right;color:#000">0<span class=p>.</span>00</div>
<div class="t num" style="left:1419px;top:575px;width:88px;text-align:right;color:#000">0<span class=p>.</span>00</div>
<div class="t num" style="left:1511px;top:575px;width:88px;text-align:right;color:#000">0<span class=p>.</span>00</div>
<div class="t num" style="left:1603px;top:575px;width:88px;text-align:right;color:#000">0<span class=p>.</span>00</div>
<div class="t num" style="left:1695px;top:575px;width:88px;text-align:right;color:#000">2<span class=p>,</span>103<span class=p>.</span>17</div>
<div class="t num" style="left:1787px;top:575px;width:88px;text-align:right;color:#000">2<span class=p>.</span>63</div>
<div class="ab" style="left:494px;top:598px;width:1386px;height:24px;background:#fff;border-bottom:1px solid #a6a6a6"></div>
<div class="t" style="left:597px;top:598px;color:#000">自制</div>
<div class="t" style="left:689px;top:598px;color:#000">否</div>
<div class="t" style="left:781px;top:598px;color:#000">个</div>
<div class="t num" style="left:959px;top:599px;width:88px;text-align:right;color:#000">680<span class=p>.</span>00</div>
<div class="t num" style="left:1051px;top:599px;width:88px;text-align:right;color:#000">1<span class=p>.</span>00</div>
<div class="t num" style="left:1143px;top:599px;width:88px;text-align:right;color:#000">680<span class=p>.</span>00</div>
<div class="t num" style="left:1235px;top:599px;width:88px;text-align:right;color:#000">1<span class=p>,</span>787<span class=p>.</span>70</div>
<div class="t num" style="left:1327px;top:599px;width:88px;text-align:right;color:#000">0<span class=p>.</span>00</div>
<div class="t num" style="left:1419px;top:599px;width:88px;text-align:right;color:#000">0<span class=p>.</span>00</div>
<div class="t num" style="left:1511px;top:599px;width:88px;text-align:right;color:#000">0<span class=p>.</span>00</div>
<div class="t num" style="left:1603px;top:599px;width:88px;text-align:right;color:#000">0<span class=p>.</span>00</div>
<div class="t num" style="left:1695px;top:599px;width:88px;text-align:right;color:#000">1<span class=p>,</span>787<span class=p>.</span>70</div>
<div class="t num" style="left:1787px;top:599px;width:88px;text-align:right;color:#000">2<span class=p>.</span>63</div>
<div class="ab" style="left:494px;top:622px;width:1386px;height:24px;background:#f7f2c8;border-bottom:1px solid #a6a6a6"></div>
<div class="t num" style="left:959px;top:623px;width:88px;text-align:right;color:#000">9<span class=p>,</span>678<span class=p>.</span>00</div>
<div class="t num" style="left:1143px;top:623px;width:88px;text-align:right;color:#000">9<span class=p>,</span>678<span class=p>.</span>00</div>
<div class="t num" style="left:1235px;top:623px;width:88px;text-align:right;color:#000">50<span class=p>,</span>547<span class=p>.</span>59</div>
<div class="t num" style="left:1327px;top:623px;width:88px;text-align:right;color:#000">0<span class=p>.</span>00</div>
<div class="t num" style="left:1419px;top:623px;width:88px;text-align:right;color:#000">0<span class=p>.</span>00</div>
<div class="t num" style="left:1511px;top:623px;width:88px;text-align:right;color:#000">0<span class=p>.</span>00</div>
<div class="t num" style="left:1603px;top:623px;width:88px;text-align:right;color:#000">0<span class=p>.</span>00</div>
<div class="t num" style="left:1695px;top:623px;width:88px;text-align:right;color:#000">50<span class=p>,</span>547<span class=p>.</span>59</div>
<div class="t num" style="left:1787px;top:623px;width:88px;text-align:right;color:#000">5<span class=p>.</span>22</div>
<div class="ab" style="left:499px;top:286px;width:1px;height:360px;background:#b4c6e0"></div>
<div class="ab" style="left:591px;top:286px;width:1px;height:360px;background:#b4c6e0"></div>
<div class="ab" style="left:683px;top:286px;width:1px;height:360px;background:#b4c6e0"></div>
<div class="ab" style="left:775px;top:286px;width:1px;height:360px;background:#b4c6e0"></div>
<div class="ab" style="left:867px;top:286px;width:1px;height:360px;background:#b4c6e0"></div>
<div class="ab" style="left:959px;top:286px;width:1px;height:360px;background:#b4c6e0"></div>
<div class="ab" style="left:1051px;top:286px;width:1px;height:360px;background:#b4c6e0"></div>
<div class="ab" style="left:1143px;top:286px;width:1px;height:360px;background:#b4c6e0"></div>
<div class="ab" style="left:1235px;top:286px;width:1px;height:360px;background:#b4c6e0"></div>
<div class="ab" style="left:1327px;top:286px;width:1px;height:360px;background:#b4c6e0"></div>
<div class="ab" style="left:1419px;top:286px;width:1px;height:360px;background:#b4c6e0"></div>
<div class="ab" style="left:1511px;top:286px;width:1px;height:360px;background:#b4c6e0"></div>
<div class="ab" style="left:1603px;top:286px;width:1px;height:360px;background:#b4c6e0"></div>
<div class="ab" style="left:1695px;top:286px;width:1px;height:360px;background:#b4c6e0"></div>
<div class="ab" style="left:1787px;top:286px;width:1px;height:360px;background:#b4c6e0"></div>
<div class="ab" style="left:1879px;top:286px;width:1px;height:360px;background:#b4c6e0"></div>
<div class="ab" style="left:1880px;top:251px;width:16px;height:460px;background:#d4d0c8"></div>
<div class="ab" style="left:1880px;top:251px;width:16px;height:7px;background:#fff;border-right:2px solid #222;border-bottom:2px solid #222"></div>
<div class="ab" style="left:1880px;top:258px;width:16px;height:16px;background:#d4d0c8;border:1px solid;border-color:#fff #404040 #404040 #fff;box-shadow:inset -1px -1px #808080"></div><svg class="ab" style="left:1884px;top:263px" width="8" height="5"><path d="M0 4.5 H7 L3.5 0.5 Z" fill="#000"/></svg>
<div class="ab" style="left:1880px;top:429px;width:16px;height:122px;background:#d4d0c8;border:1px solid;border-color:#fff #404040 #404040 #fff"></div>
<div class="ab" style="left:1880px;top:695px;width:16px;height:16px;background:#d4d0c8;border:1px solid;border-color:#fff #404040 #404040 #fff"></div><svg class="ab" style="left:1884px;top:700px" width="8" height="5"><path d="M0 0.5 H7 L3.5 4.5 Z" fill="#000"/></svg>
<div class="ab" style="left:494px;top:711px;width:1386px;height:16px;background:#d4d0c8"></div>
<div class="ab" style="left:494px;top:711px;width:7px;height:16px;background:#fff;border-right:2px solid #222;border-bottom:2px solid #222"></div>
<div class="ab" style="left:501px;top:711px;width:16px;height:16px;background:#d4d0c8;border:1px solid;border-color:#fff #404040 #404040 #fff;box-shadow:inset -1px -1px #808080"></div><svg class="ab" style="left:506px;top:715px" width="5" height="8"><path d="M4.5 0 V7.5 L0.5 3.75 Z" fill="#000"/></svg>
<div class="ab" style="left:1290px;top:711px;width:574px;height:16px;background:#d4d0c8;border:1px solid;border-color:#fff #404040 #404040 #fff"></div>
<div class="ab" style="left:1864px;top:711px;width:16px;height:16px;background:#d4d0c8;border:1px solid;border-color:#fff #404040 #404040 #fff"></div><svg class="ab" style="left:1869px;top:715px" width="5" height="8"><path d="M0.5 0 V7.5 L4.5 3.75 Z" fill="#000"/></svg>
<svg class="ab" style="left:1845px;top:572px" width="65" height="65"><defs><radialGradient id="usbc" cx=".5" cy=".5" r=".5"><stop offset="0" stop-color="#eef2fc" stop-opacity=".985"/><stop offset=".8" stop-color="#e2e9fa" stop-opacity=".985"/><stop offset="1" stop-color="#b8c8f4" stop-opacity=".95"/></radialGradient><linearGradient id="usbb" x1="0" y1="0" x2="0" y2="1"><stop offset="0" stop-color="#7a9cf6"/><stop offset="1" stop-color="#4a6ef0"/></linearGradient><linearGradient id="usbm" x1="0" y1="0" x2="0" y2="1"><stop offset="0" stop-color="#e8e8e8"/><stop offset="1" stop-color="#a8a8a8"/></linearGradient></defs><circle cx="32.6" cy="32" r="31.3" fill="url(#usbc)"/><rect x="25" y="16" width="15" height="9" fill="url(#usbm)"/><rect x="28.5" y="19.5" width="2" height="2" fill="#444"/><rect x="34.5" y="19.5" width="2" height="2" fill="#444"/><path d="M21.5 24 H43.5 V40 A11 11 0 0 1 21.5 40 Z" fill="url(#usbb)"/></svg>
<div class="ab" style="left:493px;top:729px;width:1404px;height:28px;background:linear-gradient(#fdfdfd,#e9ebeb)"></div>
<div class="t" style="left:503px;top:736px;color:#333">共</div><div class="t m" style="left:520px;top:736px;color:#e82010">29</div><div class="t" style="left:537px;top:736px;color:#333">条记录</div>
<div class="t" style="left:1527px;top:736px;color:#333">每页显示</div>
<div class="ab" style="left:1582px;top:734px;width:34px;height:18px;border:1px solid #c8d0d8;border-radius:2px;background:#fff;color:#1a8ad8;text-align:center;line-height:16px;font-family:'Liberation Mono';letter-spacing:-1.2px">50</div>
<div class="t" style="left:1621px;top:736px;color:#333">条</div>
<div class="ab" style="left:1654px;top:730px;width:1px;height:26px;background:#d4d8dc"></div>
<div class="ab" style="left:1680px;top:730px;width:1px;height:26px;background:#d4d8dc"></div>
<div class="ab" style="left:1707px;top:730px;width:1px;height:26px;background:#d4d8dc"></div>
<div class="ab" style="left:1786px;top:730px;width:1px;height:26px;background:#d4d8dc"></div>
<div class="ab" style="left:1812px;top:730px;width:1px;height:26px;background:#d4d8dc"></div>
<div class="ab" style="left:1839px;top:730px;width:1px;height:26px;background:#d4d8dc"></div>
<svg class="ab" style="left:1662px;top:738px" width="9" height="10"><rect x="0" y="0.5" width="2" height="9" fill="#a8b4c0"/><path d="M7.5 0.5 L3 5 L7.5 9.5" stroke="#a8b4c0" stroke-width="2.2" fill="none"/></svg>
<svg class="ab" style="left:1689px;top:738px" width="7" height="10"><path d="M5.5 0.5 L1.5 5 L5.5 9.5" stroke="#a8b4c0" stroke-width="2" fill="none"/></svg>
<svg class="ab" style="left:1795px;top:738px" width="7" height="10"><path d="M1 0.5 L5 5 L1 9.5" stroke="#a8b4c0" stroke-width="2" fill="none"/></svg>
<svg class="ab" style="left:1820px;top:738px" width="9" height="10"><rect x="7" y="0.5" width="2" height="9" fill="#a8b4c0"/><path d="M1 0.5 L5.5 5 L1 9.5" stroke="#a8b4c0" stroke-width="2.2" fill="none"/></svg>
<div class="ab" style="left:1714px;top:734px;width:34px;height:18px;border:1px solid #c8d0d8;border-radius:2px;background:#fff;color:#1a8ad8;text-align:center;line-height:16px;font-family:'Liberation Mono';letter-spacing:-1.2px">1</div>
<div class="t" style="left:1752px;top:736px;color:#222;font-family:'Liberation Mono';letter-spacing:-1.2px">/ 1</div>
<div class="ab" style="left:1848px;top:732px;width:40px;height:22px;border:1px solid #9a9a9a;border-radius:3px;background:linear-gradient(#fff,#ececec);text-align:center;line-height:20px;color:#111">跳转</div>
<div class="t" style="left:78px;top:775px;color:#fff">就绪</div>
<div class="t" style="left:1586px;top:776px;color:#fff"><span style="font-family:'Liberation Mono';letter-spacing:-1.5px;font-size:11px">demo</span> (账套主管)</div>
<div class="ab" style="left:1682px;top:771px;width:1px;height:22px;background:#3a70b4"></div>
<div class="t" style="left:1690px;top:776px;color:#fff;font-family:'Liberation Mono';letter-spacing:-1.2px">2015-01-11</div>
<div class="ab" style="left:1763px;top:771px;width:1px;height:22px;background:#3a70b4"></div>
<div class="t" style="left:1772px;top:776px;color:#fff;font-family:'Liberation Mono';letter-spacing:-1.2px">4006-600-588</div>
<div class="ab" style="left:1861px;top:771px;width:1px;height:22px;background:#3a70b4"></div>
<svg class="ab" style="left:1873px;top:775px" width="16" height="16"><rect width="16" height="16" fill="#fff"/><rect x="1" y="1" width="14" height="14" fill="#999"/><rect x="1" y="1" width="1" height="1" fill="#333"/><rect x="1" y="3" width="1" height="1" fill="#333"/><rect x="1" y="6" width="1" height="1" fill="#333"/><rect x="1" y="7" width="1" height="1" fill="#333"/><rect x="1" y="9" width="1" height="1" fill="#333"/><rect x="1" y="10" width="1" height="1" fill="#333"/><rect x="1" y="12" width="1" height="1" fill="#333"/><rect x="1" y="14" width="1" height="1" fill="#333"/><rect x="2" y="2" width="1" height="1" fill="#333"/><rect x="2" y="8" width="1" height="1" fill="#333"/><rect x="2" y="11" width="1" height="1" fill="#333"/><rect x="2" y="12" width="1" height="1" fill="#333"/><rect x="2" y="14" width="1" height="1" fill="#333"/><rect x="3" y="5" width="1" height="1" fill="#333"/><rect x="3" y="7" width="1" height="1" fill="#333"/><rect x="3" y="10" width="1" height="1" fill="#333"/><rect x="3" y="11" width="1" height="1" fill="#333"/><rect x="3" y="12" width="1" height="1" fill="#333"/><rect x="3" y="14" width="1" height="1" fill="#333"/><rect x="4" y="2" width="1" height="1" fill="#333"/><rect x="4" y="4" width="1" height="1" fill="#333"/><rect x="4" y="5" width="1" height="1" fill="#333"/><rect x="4" y="14" width="1" height="1" fill="#333"/><rect x="5" y="6" width="1" height="1" fill="#333"/><rect x="5" y="9" width="1" height="1" fill="#333"/><rect x="5" y="10" width="1" height="1" fill="#333"/><rect x="5" y="13" width="1" height="1" fill="#333"/><rect x="6" y="1" width="1" height="1" fill="#333"/><rect x="6" y="2" width="1" height="1" fill="#333"/><rect x="6" y="3" width="1" height="1" fill="#333"/><rect x="6" y="6" width="1" height="1" fill="#333"/><rect x="6" y="8" width="1" height="1" fill="#333"/><rect x="6" y="10" width="1" height="1" fill="#333"/><rect x="7" y="1" width="1" height="1" fill="#333"/><rect x="7" y="2" width="1" height="1" fill="#333"/><rect x="7" y="4" width="1" height="1" fill="#333"/><rect x="7" y="5" width="1" height="1" fill="#333"/><rect x="7" y="6" width="1" height="1" fill="#333"/><rect x="7" y="8" width="1" height="1" fill="#333"/><rect x="7" y="9" width="1" height="1" fill="#333"/><rect x="7" y="11" width="1" height="1" fill="#333"/><rect x="7" y="14" width="1" height="1" fill="#333"/><rect x="8" y="1" width="1" height="1" fill="#333"/><rect x="8" y="9" width="1" height="1" fill="#333"/><rect x="8" y="11" width="1" height="1" fill="#333"/><rect x="8" y="12" width="1" height="1" fill="#333"/><rect x="9" y="2" width="1" height="1" fill="#333"/><rect x="9" y="3" width="1" height="1" fill="#333"/><rect x="9" y="5" width="1" height="1" fill="#333"/><rect x="9" y="8" width="1" height="1" fill="#333"/><rect x="9" y="10" width="1" height="1" fill="#333"/><rect x="9" y="12" width="1" height="1" fill="#333"/><rect x="10" y="1" width="1" height="1" fill="#333"/><rect x="10" y="2" width="1" height="1" fill="#333"/><rect x="10" y="5" width="1" height="1" fill="#333"/><rect x="10" y="6" width="1" height="1" fill="#333"/><rect x="10" y="8" width="1" height="1" fill="#333"/><rect x="10" y="9" width="1" height="1" fill="#333"/><rect x="10" y="10" width="1" height="1" fill="#333"/><rect x="10" y="11" width="1" height="1" fill="#333"/><rect x="10" y="13" width="1" height="1" fill="#333"/><rect x="10" y="14" width="1" height="1" fill="#333"/><rect x="11" y="2" width="1" height="1" fill="#333"/><rect x="11" y="5" width="1" height="1" fill="#333"/><rect x="11" y="6" width="1" height="1" fill="#333"/><rect x="11" y="8" width="1" height="1" fill="#333"/><rect x="11" y="9" width="1" height="1" fill="#333"/><rect x="11" y="10" width="1" height="1" fill="#333"/><rect x="11" y="12" width="1" height="1" fill="#333"/><rect x="11" y="13" width="1" height="1" fill="#333"/><rect x="11" y="14" width="1" height="1" fill="#333"/><rect x="12" y="2" width="1" height="1" fill="#333"/><rect x="12" y="4" width="1" height="1" fill="#333"/><rect x="12" y="5" width="1" height="1" fill="#333"/><rect x="12" y="8" width="1" height="1" fill="#333"/><rect x="12" y="9" width="1" height="1" fill="#333"/><rect x="12" y="10" width="1" height="1" fill="#333"/><rect x="12" y="12" width="1" height="1" fill="#333"/><rect x="13" y="1" width="1" height="1" fill="#333"/><rect x="13" y="2" width="1" height="1" fill="#333"/><rect x="13" y="6" width="1" height="1" fill="#333"/><rect x="13" y="7" width="1" height="1" fill="#333"/><rect x="13" y="8" width="1" height="1" fill="#333"/><rect x="13" y="10" width="1" height="1" fill="#333"/><rect x="13" y="11" width="1" height="1" fill="#333"/><rect x="13" y="12" width="1" height="1" fill="#333"/><rect x="13" y="13" width="1" height="1" fill="#333"/><rect x="13" y="14" width="1" height="1" fill="#333"/><rect x="14" y="2" width="1" height="1" fill="#333"/><rect x="14" y="3" width="1" height="1" fill="#333"/><rect x="14" y="7" width="1" height="1" fill="#333"/><rect x="14" y="10" width="1" height="1" fill="#333"/></svg>
<div class="ab" style="left:0;top:807px;width:1914px;height:30px;background:#d4d0c8;border-top:1px solid #e8e6e0;box-shadow:inset 0 1px #fff"></div>
<div class="ab" style="left:2px;top:811px;width:47px;height:22px;background:#d4d0c8;border:1px solid;border-color:#fff #404040 #404040 #fff;box-shadow:inset -1px -1px #808080"></div>
<svg class="ab" style="left:4px;top:814px" width="16" height="16"><path d="M1 3 Q4 1 7 3 V8 Q4 6 1 8 Z" fill="#f04a20"/><path d="M8 3 Q11 5 14 3 V8 Q11 10 8 8 Z" fill="#40b030"/><path d="M1 9 Q4 7 7 9 V14 Q4 12 1 14 Z" fill="#2a7ae0"/><path d="M8 9 Q11 11 14 9 V14 Q11 16 8 14 Z" fill="#f8c020"/></svg>
<div class="t" style="left:22px;top:815px;color:#000;font-weight:bold">开始</div>
<div class="ab" style="left:57px;top:814px;width:2px;height:18px;border-left:1px solid #808080;border-right:1px solid #fff"></div>
<svg class="ab" style="left:66px;top:815px" width="18" height="15"><path d="M9 1 Q6 3 9 5" stroke="#6a6aa0" fill="none"/><rect x="1" y="5" width="16" height="9" rx="4" fill="#b8b8e8" stroke="#6a6aa0"/><path d="M4 8 H14 M4 10.5 H14" stroke="#6a6aa0" stroke-dasharray="1 1"/></svg>
<div class="ab" style="left:92px;top:814px;width:2px;height:18px;border-left:1px solid #808080;border-right:1px solid #fff"></div>
<div class="ab" style="left:98px;top:811px;width:159px;height:22px;background:repeating-conic-gradient(#fff 0 25%,#d4d0c8 0 50%) 0 0/2px 2px;border:1px solid;border-color:#404040 #fff #fff #404040;box-shadow:inset 1px 1px #808080"></div>
<svg class="ab" style="left:102px;top:814px" width="17" height="17"><rect x="0" y="1" width="16" height="15" rx="2" fill="#e02020"/><text x="1.5" y="12" font-family="Liberation Sans" font-size="8" font-weight="bold" fill="#fff">U8</text><text x="11" y="7" font-size="6" fill="#fff">+</text></svg>
<div class="t" style="left:122px;top:817px;color:#000;font-family:'Liberation Mono';letter-spacing:-1.2px">yonyou U8</div>
<div class="ab" style="left:261px;top:811px;width:159px;height:22px;background:#d4d0c8;border:1px solid;border-color:#fff #404040 #404040 #fff;box-shadow:inset -1px -1px #808080"></div>
<svg class="ab" style="left:265px;top:814px" width="17" height="17"><rect x="1" y="1" width="6" height="9" fill="#f0d040" stroke="#a08020" stroke-width=".6"/><path d="M5 8 L15 15 M8 15 L14 9" stroke="#555" stroke-width="1.6"/><rect x="0.5" y="0.5" width="15" height="15" fill="none" stroke="#40a040" stroke-dasharray="1 1" stroke-width=".6"/></svg>
<div class="t" style="left:285px;top:817px;color:#000;font-family:'Liberation Mono';letter-spacing:-1.2px">Microsoft SQL Serve...</div>
<div class="ab" style="left:424px;top:811px;width:159px;height:22px;background:#d4d0c8;border:1px solid;border-color:#fff #404040 #404040 #fff;box-shadow:inset -1px -1px #808080"></div>
<svg class="ab" style="left:428px;top:814px" width="17" height="17"><rect x="1" y="3" width="11" height="13" fill="#f4f4f4" stroke="#3a5a90" stroke-width=".8"/><rect x="5" y="1" width="11" height="12" fill="#fff" stroke="#3a5a90" stroke-width=".8"/><path d="M7 4 H14 M7 7 H14 M7 10 H14" stroke="#2a6ad0"/><path d="M7 4 L10 6" stroke="#e03030"/></svg>
<div class="t" style="left:448px;top:817px;color:#000;font-family:'Liberation Mono';letter-spacing:-1.2px">SQL Server Profiler...</div>
<div class="ab" style="left:587px;top:811px;width:159px;height:22px;background:#d4d0c8;border:1px solid;border-color:#fff #404040 #404040 #fff;box-shadow:inset -1px -1px #808080"></div>
<svg class="ab" style="left:591px;top:814px" width="17" height="17"><rect x="1" y="1" width="14" height="10" fill="#c8c8c8" stroke="#404040" stroke-width=".8"/><rect x="3" y="3" width="10" height="6" fill="#003000"/><path d="M3 7 L6 5 L8 7 L12 4" stroke="#30e030" stroke-width=".8" fill="none"/><rect x="0" y="12" width="16" height="4" fill="#b8b8b8" stroke="#404040" stroke-width=".6"/></svg>
<div class="t" style="left:611px;top:817px;color:#000;font-family:'Liberation Mono';letter-spacing:-1.2px">Windows 任务管理器</div>
<div class="ab" style="left:750px;top:811px;width:159px;height:22px;background:#d4d0c8;border:1px solid;border-color:#fff #404040 #404040 #fff;box-shadow:inset -1px -1px #808080"></div>
<svg class="ab" style="left:754px;top:814px" width="17" height="17"><rect x="1" y="4" width="10" height="12" fill="#fff" stroke="#404040" stroke-width=".8"/><path d="M3 8 H9 M3 11 H9 M3 14 H8" stroke="#404040" stroke-width=".6"/><text x="6" y="12" font-family="Liberation Sans" font-size="13" font-weight="bold" fill="#f0d000" stroke="#404040" stroke-width=".5">?</text></svg>
<div class="t" style="left:774px;top:817px;color:#000;font-family:'Liberation Mono';letter-spacing:-1.2px">U8125 SchemaDoc Help</div>
<div class="ab" style="left:1666px;top:813px;width:2px;height:19px;border-left:1px solid #808080;border-right:1px solid #fff"></div>
<svg class="ab" style="left:1675px;top:815px" width="17" height="17"><ellipse cx="8.5" cy="8.5" rx="7.5" ry="3.5" transform="rotate(-35 8.5 8.5)" fill="none" stroke="#60b0f0" stroke-width="1.3"/><text x="2.5" y="14" font-family="Liberation Sans" font-size="14" font-weight="bold" fill="#1a70d8">e</text></svg>
<svg class="ab" style="left:1698px;top:815px" width="16" height="16"><rect x="1" y="1" width="13" height="14" rx="2" fill="#2a70d8"/><circle cx="7.5" cy="8" r="4.5" fill="#f0f4fa"/><rect x="7" y="6" width="5" height="4" fill="#2a70d8"/></svg>
<div class="ab" style="left:1722px;top:811px;width:190px;height:24px;border:1px solid;border-color:#808080 #fff #fff #808080"></div>
<svg class="ab" style="left:1726px;top:815px" width="17" height="17"><circle cx="6" cy="5" r="3.5" fill="#e0a070"/><path d="M2 5 Q6 -1 10 5" fill="#402010"/><path d="M1 14 Q6 8 11 14 Z" fill="#4a8ad8"/><rect x="6" y="9" width="10" height="7" fill="#f4f4f4" stroke="#3a6ab0" stroke-width=".7"/></svg>
<svg class="ab" style="left:1745px;top:815px" width="17" height="17"><rect x="1" y="2" width="12" height="13" fill="#003000" stroke="#fff" stroke-width=".6"/><rect x="2" y="3" width="1" height="1" fill="#30d030"/><rect x="2" y="5" width="1" height="1" fill="#30d030"/><rect x="2" y="7" width="1" height="1" fill="#30d030"/><rect x="2" y="9" width="1" height="1" fill="#30d030"/><rect x="2" y="11" width="1" height="1" fill="#30d030"/><rect x="2" y="13" width="1" height="1" fill="#30d030"/><rect x="4" y="3" width="1" height="1" fill="#30d030"/><rect x="4" y="5" width="1" height="1" fill="#30d030"/><rect x="4" y="7" width="1" height="1" fill="#30d030"/><rect x="4" y="9" width="1" height="1" fill="#30d030"/><rect x="4" y="11" width="1" height="1" fill="#30d030"/><rect x="4" y="13" width="1" height="1" fill="#30d030"/><rect x="6" y="3" width="1" height="1" fill="#30d030"/><rect x="6" y="5" width="1" height="1" fill="#30d030"/><rect x="6" y="7" width="1" height="1" fill="#30d030"/><rect x="6" y="9" width="1" height="1" fill="#30d030"/><rect x="6" y="11" width="1" height="1" fill="#30d030"/><rect x="6" y="13" width="1" height="1" fill="#30d030"/><rect x="8" y="3" width="1" height="1" fill="#30d030"/><rect x="8" y="5" width="1" height="1" fill="#30d030"/><rect x="8" y="7" width="1" height="1" fill="#30d030"/><rect x="8" y="9" width="1" height="1" fill="#30d030"/><rect x="8" y="11" width="1" height="1" fill="#30d030"/><rect x="8" y="13" width="1" height="1" fill="#30d030"/><rect x="10" y="3" width="1" height="1" fill="#30d030"/><rect x="10" y="5" width="1" height="1" fill="#30d030"/><rect x="10" y="7" width="1" height="1" fill="#30d030"/><rect x="10" y="9" width="1" height="1" fill="#30d030"/><rect x="10" y="11" width="1" height="1" fill="#30d030"/><rect x="10" y="13" width="1" height="1" fill="#30d030"/><rect x="12" y="3" width="1" height="1" fill="#30d030"/><rect x="12" y="5" width="1" height="1" fill="#30d030"/><rect x="12" y="7" width="1" height="1" fill="#30d030"/><rect x="12" y="9" width="1" height="1" fill="#30d030"/><rect x="12" y="11" width="1" height="1" fill="#30d030"/><rect x="12" y="13" width="1" height="1" fill="#30d030"/></svg>
<svg class="ab" style="left:1761px;top:815px" width="17" height="17"><rect x="6" y="1" width="9" height="8" fill="#3a3a80"/><rect x="1" y="5" width="9" height="8" fill="#5a5aa0"/><ellipse cx="7" cy="14" rx="5" ry="2" fill="#c8c8d8"/></svg>
<svg class="ab" style="left:1780px;top:815px" width="17" height="17"><rect x="0" y="2" width="15" height="13" rx="2" fill="#6aa0e0"/><path d="M4 5 Q7.5 13 11 5" stroke="#fff" stroke-width="2" fill="none"/></svg>
<svg class="ab" style="left:1797px;top:815px" width="17" height="17"><path d="M1 9 L9 5 L15 9 L8 14 Z" fill="#20d020" stroke="#000" stroke-width=".6"/><path d="M4 7 L9 2 L13 6 L8 10 Z" fill="#fff" stroke="#444" stroke-width=".6"/></svg>
<svg class="ab" style="left:1815px;top:815px" width="17" height="17"><rect x="0" y="1" width="15" height="14" rx="2" fill="#7a7a7a"/><text x="1" y="12" font-family="Liberation Sans" font-size="9" font-weight="bold" fill="#fff">vm</text></svg>
<svg class="ab" style="left:1834px;top:815px" width="17" height="17"><path d="M1 3 L6 1 L8 5 L4 8 Z" fill="#30b030"/><rect x="4" y="8" width="10" height="6" rx="1" transform="rotate(-20 9 11)" fill="#6a6a90"/></svg>
<svg class="ab" style="left:1851px;top:815px" width="17" height="17"><rect x="0" y="0" width="16" height="17" rx="2" fill="#2a70c8"/><text x="1" y="10" font-family="Liberation Sans" font-size="10" font-weight="bold" fill="#fff">U8</text><path d="M3 11 L6 13.5 L3 16 Z M8 11 H10 V16 H8 Z M11.5 11 H13.5 V16 H11.5 Z" fill="#fff"/></svg>
<div class="t" style="left:1874px;top:818px;color:#000;font-family:'Liberation Mono';letter-spacing:-1.2px">17:37</div>
<div class="ab" style="left:1284px;top:130px;width:54px;height:18px;background:#ffffe1;border:1px solid #000"></div><div class="t" style="left:1287px;top:132px;color:#000">扩展功能</div>
<div class="ab" style="left:1140px;top:236px;width:105px;height:425px;border:5px solid #ff1c10;border-radius:5px"></div>
</body></html>
